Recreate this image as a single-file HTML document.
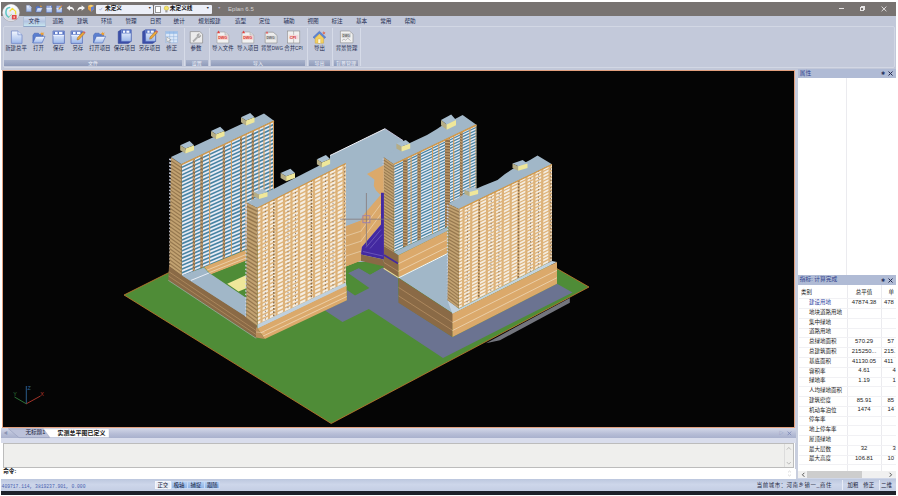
<!DOCTYPE html>
<html lang="zh-CN">
<head>
<meta charset="utf-8">
<title>Eplan 6.5</title>
<style>
html,body{margin:0;padding:0;}
body{width:898px;height:496px;overflow:hidden;position:relative;background:#fff;font-family:"Liberation Sans","Noto Sans CJK SC",sans-serif;font-size:5.6px;color:#1c2a4a;line-height:1;}
.abs{position:absolute;}
#title{left:1px;top:2px;width:895px;height:13.7px;background:#787371;}
#ribbon{left:1px;top:15.7px;width:895px;height:54.3px;background:#c2c8d9;}
#panel{left:2.5px;top:26.4px;width:892.5px;height:42px;background:#c3c9da;border-radius:2px;border:0.6px solid #d2d7e4;box-sizing:border-box;}
.tab{position:absolute;top:18.9px;height:8px;font-size:5.6px;color:#1e2c50;white-space:nowrap;text-align:center;transform:translateX(-50%);}
#tabsel{left:22.5px;top:16.2px;width:23.8px;height:10.4px;border-radius:1.5px 1.5px 0 0;background:linear-gradient(#d3dbee,#b3c4e1 50%,#c6e5ef);border:0.5px solid #aebfd6;border-bottom:0.6px solid #8fa6c8;box-sizing:border-box;}
.btn{position:absolute;top:46px;font-size:5.4px;color:#1e2c50;white-space:nowrap;transform:translateX(-50%);text-align:center;}
.gbar{position:absolute;top:59.6px;height:6.6px;background:linear-gradient(#a9b3cc,#909cba);color:#eef2fa;font-size:5px;text-align:center;line-height:6.6px;overflow:hidden;}
.gsep{position:absolute;top:28px;width:1px;height:38px;background:#d6dbe8;}
#view{left:2px;top:70px;width:793px;height:358px;background:#050505;border:1px solid #e3a07e;box-sizing:border-box;}
.phead{position:absolute;left:797.8px;width:98px;height:8.6px;background:#b0bbd5;font-size:5.7px;color:#2c3c8c;line-height:8.6px;}
.phead span{position:absolute;left:2px;}
.white{background:#fff;}
.vline{position:absolute;width:1px;background:#ebebef;}
.hline{position:absolute;height:1px;background:#f1f1f4;left:798.6px;width:97px;}
.cell{position:absolute;font-size:5.5px;color:#222;white-space:nowrap;}
.val{position:absolute;font-size:5.9px;color:#222;white-space:nowrap;width:33px;left:847.6px;text-align:center;}
#tabstrip{left:1px;top:428px;width:795px;height:10px;background:linear-gradient(#d3d8e8,#b6bdd6 60%,#a9b1cd);}
#cmdout{left:3.2px;top:442.8px;width:790.5px;height:25.7px;background:#efefed;border:1px solid #bcbcbc;box-sizing:border-box;}
#cmdline{left:1px;top:468.6px;width:795px;height:10.3px;background:#fff;}
#status{left:1px;top:478.9px;width:895px;height:11.9px;background:linear-gradient(#bcc7de,#cdd6ea 45%,#c4cee4);}
#taskbar{left:1px;top:490.8px;width:895px;height:4.3px;background:#1d222b;}
.st{position:absolute;top:482.8px;font-size:5.4px;color:#1b2440;white-space:nowrap;}
.c3{font-size:5.9px;}

</style>
</head>
<body>
<div class="abs" id="title"></div>
<div class="abs" id="ribbon"></div>
<div class="abs" id="panel"></div>
<div class="abs" id="tabsel"></div>
<div class="tab" style="left:34.2px">文件</div>
<div class="tab" style="left:58px">道路</div>
<div class="tab" style="left:82.5px">建筑</div>
<div class="tab" style="left:106.6px">环境</div>
<div class="tab" style="left:131px">管理</div>
<div class="tab" style="left:155.4px">日照</div>
<div class="tab" style="left:179.2px">统计</div>
<div class="tab" style="left:209.5px">规划报建</div>
<div class="tab" style="left:240.5px">造型</div>
<div class="tab" style="left:264.5px">定位</div>
<div class="tab" style="left:289px">辅助</div>
<div class="tab" style="left:313px">视图</div>
<div class="tab" style="left:337px">标注</div>
<div class="tab" style="left:361.5px">基本</div>
<div class="tab" style="left:385.8px">常用</div>
<div class="tab" style="left:410px">帮助</div>

<div class="btn" style="left:16px">新建总平</div>
<div class="btn" style="left:38.4px">打开</div>
<div class="btn" style="left:58.4px">保存</div>
<div class="btn" style="left:77.8px">另存</div>
<div class="btn" style="left:99.7px">打开项目</div>
<div class="btn" style="left:124.5px">保存项目</div>
<div class="btn" style="left:149.5px">另存项目</div>
<div class="btn" style="left:171.7px">修正</div>
<div class="btn" style="left:196px">参数</div>
<div class="btn" style="left:222.8px">导入文件</div>
<div class="btn" style="left:247.8px">导入项目</div>
<div class="btn" style="left:272px">背景<span style="font-size:4.5px;letter-spacing:0.1px">DWG</span></div>
<div class="btn" style="left:293.6px">合并<span style="font-size:4.5px;letter-spacing:0.1px">CPI</span></div>
<div class="btn" style="left:319.5px">导出</div>
<div class="btn" style="left:346.5px">背景管理</div>

<div class="gbar" style="left:4px;width:178px">文件</div>
<div class="gbar" style="left:186px;width:21.6px">设置</div>
<div class="gbar" style="left:210.8px;width:94.4px">导入</div>
<div class="gbar" style="left:309px;width:21px">导出</div>
<div class="gbar" style="left:333.6px;width:24.6px">背景管理</div>
<div class="gsep" style="left:184px"></div>
<div class="gsep" style="left:209px"></div>
<div class="gsep" style="left:307px"></div>
<div class="gsep" style="left:331.8px"></div>
<div class="gsep" style="left:360px"></div>

<!-- quick access combos -->
<div class="abs" style="left:96.2px;top:4.8px;width:56.8px;height:8.8px;border-radius:1px;background:#eceff8"></div>
<div class="abs" style="left:105px;top:6.4px;font-size:5.7px;color:#111;font-weight:bold">未定义</div>
<div class="abs" style="left:148px;top:7.2px;font-size:3.6px;color:#333">▼</div>
<div class="abs" style="left:154.2px;top:4.8px;width:58px;height:8.8px;border-radius:1px;background:#eceff8"></div>
<div class="abs" style="left:155.4px;top:5.6px;width:6px;height:7.2px;background:#fff;border:0.5px solid #9a9a9a;box-sizing:border-box"></div>
<div class="abs" style="left:169.8px;top:6.4px;font-size:5.7px;color:#111;font-weight:bold">未定义线</div>
<div class="abs" style="left:206px;top:7.2px;font-size:3.6px;color:#333">▼</div>
<div class="abs" style="left:217.5px;top:7.4px;font-size:3.6px;color:#b0accc">▼</div>
<div class="abs" style="left:228px;top:6.3px;font-size:6px;color:#d6d4d4;letter-spacing:0.05px">Eplan 6.5</div>
<div class="abs" style="left:839px;top:8.3px;width:5.3px;height:0.8px;background:#e6e4e4"></div>
<div class="abs" style="left:860px;top:6.6px;width:4px;height:4.2px;border:0.8px solid #e6e4e4;box-sizing:border-box"></div><div class="abs" style="left:861.2px;top:5.7px;width:4px;height:4.2px;border:0.8px solid #e6e4e4;border-left-width:0;border-bottom-width:0;box-sizing:border-box"></div>
<svg class="abs" style="left:881px;top:5.6px" width="6" height="6" viewBox="0 0 6 6"><path d="M0.6,0.6 L5.4,5.2 M5.4,0.6 L0.6,5.2" stroke="#eceaea" stroke-width="0.9"/></svg>

<svg class="abs" style="left:0;top:0" width="420" height="70" viewBox="0 0 420 70">
<defs>
<linearGradient id="gpage" x1="0" y1="0" x2="0" y2="1"><stop offset="0" stop-color="#f4f8ff"/><stop offset="1" stop-color="#9db8ea"/></linearGradient>
<linearGradient id="gfl" x1="0" y1="0" x2="0" y2="1"><stop offset="0" stop-color="#6f8fd6"/><stop offset="1" stop-color="#b9d0f4"/></linearGradient>
<linearGradient id="gorb" x1="0" y1="0" x2="0" y2="1"><stop offset="0" stop-color="#ffffff"/><stop offset="0.55" stop-color="#e9ebf2"/><stop offset="1" stop-color="#cfd3e0"/></linearGradient>
<g id="page"><path d="M0,0 H6.5 L10.6,3.8 V12.4 H0 Z" fill="url(#gpage)" stroke="#6a82c4" stroke-width="0.7"/><path d="M6.5,0 V3.8 H10.6" fill="#dfe8fb" stroke="#6a82c4" stroke-width="0.6"/></g>
<g id="folder"><path d="M0.5,4 L2,2 H6 L7,3.4 H10.5 V5.2 H3.4 L0.5,11.6 Z" fill="#5b7fd0" stroke="#3f5eb0" stroke-width="0.5"/><path d="M3.4,5.2 H12.6 L9.6,11.8 H0.5 Z" fill="url(#gpage)" stroke="#4a69ba" stroke-width="0.6"/><path d="M9.3,0.2 l0.9,1.5 1.8,-0.3 -1.2,1.3 0.9,1.6 -1.7,-0.8 -1.3,1.3 0.3,-1.8 -1.6,-0.8 1.8,-0.3z" fill="#f0a030"/></g>
<g id="floppy"><path d="M0,0 H11.4 V12.4 H0 Z" fill="url(#gpage)" stroke="#4a64b8" stroke-width="0.7"/><rect x="0.3" y="0.3" width="10.8" height="3.4" fill="#5673c4"/><rect x="2" y="0.9" width="2.6" height="2.2" fill="#f4f7ff"/><rect x="6" y="0.9" width="3.4" height="2.2" fill="#f4f7ff"/><path d="M0.3,4.6 H11.1" stroke="#e9f0ff" stroke-width="1"/></g>
<g id="pencil"><path d="M0,6.4 L5.4,0.6 L7.2,2.2 L1.8,8 L-0.4,8.6 Z" fill="#e9a53a" stroke="#8a5a1a" stroke-width="0.4"/><path d="M5.4,0.6 L6.4,-0.4 L8.2,1.2 L7.2,2.2 Z" fill="#d06060"/></g>
<g id="floppy3"><path d="M0,1.8 L3,0 H13 V11.6 L10,13.6 H0 Z" fill="#3c4fa8" stroke="#2f4496" stroke-width="0.5"/><path d="M3,0 H13 V11.6 H3 Z" fill="url(#gpage)" stroke="#4a64b8" stroke-width="0.5"/><rect x="3.2" y="0.2" width="9.6" height="3.4" fill="#5673c4"/><rect x="4.8" y="0.8" width="2.2" height="2.2" fill="#f4f7ff"/><rect x="8.2" y="0.8" width="3" height="2.2" fill="#f4f7ff"/></g>
<g id="dwgpage"><path d="M0,1.4 H8 L11.8,4.6 V12.4 H0 Z" fill="#f2f2f2" stroke="#9a9a9a" stroke-width="0.6"/><path d="M8,1.4 V4.6 H11.8" fill="#dcdcdc" stroke="#9a9a9a" stroke-width="0.5"/><rect x="0.6" y="4.8" width="10.6" height="4.4" fill="#f6d2cc"/></g>
</defs>
<!-- orb -->
<circle cx="11" cy="12.8" r="8.9" fill="#8a8684" opacity="0.6"/>
<circle cx="11" cy="12.7" r="8.2" fill="url(#gorb)" stroke="#f6f6f8" stroke-width="0.6"/>
<path d="M9.6,7.6 C5.2,8 4.6,14.8 8.6,17.2" fill="none" stroke="#5fc6c6" stroke-width="1.5" stroke-linecap="round"/>
<path d="M9.6,11.4 L12.4,8.4 L15.6,11.4 V14.6" fill="none" stroke="#f2dc3c" stroke-width="1.3" stroke-linejoin="round"/>
<path d="M8.6,17.2 L11.6,14.4" fill="none" stroke="#8fd08f" stroke-width="0.9"/>
<rect x="11.9" y="15" width="4.7" height="4.4" fill="#e04a4a"/>
<rect x="13.4" y="16.2" width="1.6" height="2" fill="#f6b0a0"/>
<!-- quick access -->
<g transform="translate(26.3,5.2) scale(0.47,0.52)"><use href="#page"/></g>
<g transform="translate(35.6,5) scale(0.54,0.6)"><use href="#folder"/></g>
<g transform="translate(46.3,5.8) scale(0.5,0.54)"><use href="#floppy"/></g>
<g transform="translate(56.3,5.8) scale(0.5,0.54)"><use href="#floppy"/><g transform="translate(5,-1) scale(0.9)"><use href="#pencil"/></g></g>
<path d="M66.6,8 L70,5.2 V6.8 C73,6.8 74.2,8.6 74.2,11.2 C73.4,9.6 72.2,9 70,9 V10.8 Z" fill="#f4f4f4"/>
<path d="M85,8 L81.6,5.2 V6.8 C78.6,6.8 77.4,8.6 77.4,11.2 C78.2,9.6 79.4,9 81.6,9 V10.8 Z" fill="#f4f4f4"/>
<path d="M88,6 L91,4.8 L94,6 V9.2 L91,11.8 L88,9.2 Z" fill="#e8a040"/><path d="M88,6 L91,7.2 L94,6 L91,4.8Z" fill="#f4d070"/><path d="M91,7.2 V11.8 L94,9.2 V6Z" fill="#5f80d2"/>
<path d="M99.4,9 l1,1.2 1.8,-2.4" fill="none" stroke="#9ab0e0" stroke-width="0.8"/>
<circle cx="166.4" cy="8.2" r="2.2" fill="#f4e46a" stroke="#b8a030" stroke-width="0.4"/><rect x="165.3" y="10.2" width="2.2" height="2.2" fill="#a0a0a0"/>
<!-- ribbon icons -->
<g transform="translate(11.4,31)"><use href="#page"/></g>
<g transform="translate(32.4,31.2)"><use href="#folder"/></g>
<g transform="translate(53,31)"><use href="#floppy"/></g>
<g transform="translate(71,31)"><use href="#floppy"/><g transform="translate(6.4,0.4)"><use href="#pencil"/></g></g>
<g transform="translate(93,31.2)"><use href="#folder"/></g>
<g transform="translate(118.2,29.8)"><use href="#floppy3"/></g>
<g transform="translate(142.6,29.8)"><use href="#floppy3"/><g transform="translate(7.4,0.8)"><use href="#pencil"/></g></g>
<!-- grid (修正) -->
<g transform="translate(165.8,31.6)"><rect x="0" y="0" width="11.8" height="11.2" fill="#dbe8f8" stroke="#8fb0dc" stroke-width="0.5"/><rect x="0" y="0" width="11.8" height="2.2" fill="#9cc0ea"/><path d="M3.9,0 V11.2 M7.9,0 V11.2 M0,5 H11.8 M0,8.2 H11.8" stroke="#8fb0dc" stroke-width="0.5"/><path d="M1,5.4 L5.2,8.4 L3.4,8.8 L4.4,11 L3.4,11.2 L2.4,9.2 L1,10.4 Z" fill="#f4f4f4" stroke="#707070" stroke-width="0.4"/></g>
<!-- wrench (参数) -->
<g transform="translate(190.2,31.6)"><path d="M0,0 H9.6 L12.4,2.6 V11.4 H0 Z" fill="#ececec" stroke="#8c8c8c" stroke-width="0.7"/><path d="M2.6,9.4 L7,4.8 C6.4,3.2 7.6,1.8 9.4,2.2 L8.2,3.6 L9,4.6 L10.4,3.6 C10.6,5.4 9.2,6.4 7.8,5.8 L3.6,10.2 Z" fill="#b8b8b8" stroke="#7c7c7c" stroke-width="0.4"/></g>
<g transform="translate(217,30.6)"><use href="#dwgpage"/><text x="1.2" y="8.6" font-size="3.7" font-weight="bold" fill="#d8352c" font-family="Liberation Sans, sans-serif">DWG</text><path d="M0,2.6 l1.6,-2.6 1.6,2.6z" fill="#e04040"/></g>
<g transform="translate(242,30.6)"><use href="#dwgpage"/><text x="1.2" y="8.6" font-size="3.7" font-weight="bold" fill="#d8352c" font-family="Liberation Sans, sans-serif">DWG</text><path d="M0,2.6 l1.6,-2.6 1.6,2.6z" fill="#e04040"/></g>
<g transform="translate(265.2,30.8)"><path d="M0,1.4 H8 L11.8,4.6 V12.2 H0 Z" fill="#ececec" stroke="#8c8c8c" stroke-width="0.6"/><rect x="0.6" y="5" width="10.6" height="4" fill="#d8d8d8"/><text x="1.2" y="8.4" font-size="3.4" font-weight="bold" fill="#666" font-family="Liberation Sans, sans-serif">DWG</text><path d="M0.4,2.6 l1.4,-2.2 1.4,2.2z" fill="#e05050"/></g>
<g transform="translate(287.4,31)"><rect x="0" y="0" width="12.4" height="12" fill="#f0f0f0" stroke="#8c8c8c" stroke-width="0.6"/><path d="M6.2,0 V12" stroke="#8c8c8c" stroke-width="0.5"/><rect x="1.4" y="3.8" width="9.6" height="4.4" fill="#f6dada"/><text x="2.4" y="7.6" font-size="3.8" font-weight="bold" fill="#d03030" font-family="Liberation Sans, sans-serif">CPI</text></g>
<!-- house (导出) -->
<g transform="translate(313,30.6)"><path d="M0,6.6 L6.4,0.6 L12.8,6.6 L11.4,7.8 L6.4,3 L1.4,7.8 Z" fill="#5b86d6" stroke="#3a5cae" stroke-width="0.4"/><path d="M2.2,7.4 L6.4,3.4 L10.6,7.4 V12.6 H2.2 Z" fill="#f4d060" stroke="#c09a30" stroke-width="0.4"/><rect x="5" y="8.4" width="2.8" height="4.2" fill="#fff8e0" stroke="#c09a30" stroke-width="0.3"/><path d="M10.4,0.4 l0.8,1.2 1.4,-0.2 -0.9,1.1 0.6,1.3 -1.3,-0.6 -1,1 0.2,-1.4 -1.2,-0.7 1.4,-0.3z" fill="#e06a50"/></g>
<g transform="translate(340.4,31)"><path d="M0,0 H9 L12.6,3 V11.8 H0 Z" fill="#f0f0f0" stroke="#8c8c8c" stroke-width="0.6"/><rect x="1.6" y="2.6" width="8.6" height="3.6" fill="#e2e2e2" stroke="#aaa" stroke-width="0.3"/><text x="2.2" y="5.6" font-size="3" font-weight="bold" fill="#555" font-family="Liberation Sans, sans-serif">DWG</text><path d="M1.6,9.6 l2,-1.6 1.6,1.2 2.2,-2 2.8,2.4" fill="none" stroke="#888" stroke-width="0.5"/></g>
</svg>


<div class="abs" id="view"></div>
<svg width="898" height="496" viewBox="0 0 898 496" style="position:absolute;left:0;top:0" shape-rendering="geometricPrecision">
<defs><filter id="bl" x="-5%" y="-5%" width="110%" height="110%"><feGaussianBlur stdDeviation="0.45"/></filter></defs>
<polygon points="124.0,295.0 331.2,423.5 589.0,287.0 380.0,167.0" fill="#4f8c37" stroke="#c9782f" stroke-width="0.8"/>
<polygon points="486.0,343.2 569.8,297.9 569.8,302.8 500.0,340.2" fill="#73757d"/>
<polygon points="348.0,273.0 358.8,268.0 370.0,274.4 382.5,267.5 398.0,278.0 398.8,302.5 452.5,337.0 557.0,283.8 572.5,292.5 443.0,358.0 368.8,309.0 342.5,322.0 325.0,310.5 346.9,300.0 347.0,290.0 355.0,295.6 369.4,288.0" fill="#6b7391"/>
<polygon points="385.0,128.7 403.0,140.5 400.0,170.0 384.0,262.0 346.0,262.0 330.0,240.0 330.0,155.5" fill="#a1b7c8"/>
<line x1="385.0" y1="128.7" x2="330.0" y2="155.5" stroke="#f4f4fa" stroke-width="1.0"/>
<line x1="385.0" y1="128.7" x2="403.0" y2="140.5" stroke="#d9d4ee" stroke-width="0.8"/>
<polygon points="181.5,164.0 274.0,120.5 274.0,238.0 181.5,276.5" fill="#4783a2"/>
<clipPath id="c1"><polygon points="181.5,164.0 274.0,120.5 274.0,238.0 181.5,276.5"/></clipPath>
<g clip-path="url(#c1)"><g filter="url(#bl)">
<line x1="181.5" y1="165.8" x2="274.0" y2="122.4" stroke="#e9ecf6" stroke-width="1.78"/>
<line x1="181.5" y1="169.4" x2="274.0" y2="126.2" stroke="#e9ecf6" stroke-width="1.78"/>
<line x1="181.5" y1="173.1" x2="274.0" y2="130.0" stroke="#e9ecf6" stroke-width="1.78"/>
<line x1="181.5" y1="176.7" x2="274.0" y2="133.8" stroke="#e9ecf6" stroke-width="1.78"/>
<line x1="181.5" y1="180.3" x2="274.0" y2="137.6" stroke="#e9ecf6" stroke-width="1.78"/>
<line x1="181.5" y1="184.0" x2="274.0" y2="141.3" stroke="#e9ecf6" stroke-width="1.78"/>
<line x1="181.5" y1="187.6" x2="274.0" y2="145.1" stroke="#e9ecf6" stroke-width="1.78"/>
<line x1="181.5" y1="191.2" x2="274.0" y2="148.9" stroke="#e9ecf6" stroke-width="1.78"/>
<line x1="181.5" y1="194.8" x2="274.0" y2="152.7" stroke="#e9ecf6" stroke-width="1.78"/>
<line x1="181.5" y1="198.5" x2="274.0" y2="156.5" stroke="#e9ecf6" stroke-width="1.78"/>
<line x1="181.5" y1="202.1" x2="274.0" y2="160.3" stroke="#e9ecf6" stroke-width="1.78"/>
<line x1="181.5" y1="205.7" x2="274.0" y2="164.1" stroke="#e9ecf6" stroke-width="1.78"/>
<line x1="181.5" y1="209.4" x2="274.0" y2="167.9" stroke="#e9ecf6" stroke-width="1.78"/>
<line x1="181.5" y1="213.0" x2="274.0" y2="171.7" stroke="#e9ecf6" stroke-width="1.78"/>
<line x1="181.5" y1="216.6" x2="274.0" y2="175.5" stroke="#e9ecf6" stroke-width="1.78"/>
<line x1="181.5" y1="220.2" x2="274.0" y2="179.2" stroke="#e9ecf6" stroke-width="1.78"/>
<line x1="181.5" y1="223.9" x2="274.0" y2="183.0" stroke="#e9ecf6" stroke-width="1.78"/>
<line x1="181.5" y1="227.5" x2="274.0" y2="186.8" stroke="#e9ecf6" stroke-width="1.78"/>
<line x1="181.5" y1="231.1" x2="274.0" y2="190.6" stroke="#e9ecf6" stroke-width="1.78"/>
<line x1="181.5" y1="234.8" x2="274.0" y2="194.4" stroke="#e9ecf6" stroke-width="1.78"/>
<line x1="181.5" y1="238.4" x2="274.0" y2="198.2" stroke="#e9ecf6" stroke-width="1.78"/>
<line x1="181.5" y1="242.0" x2="274.0" y2="202.0" stroke="#e9ecf6" stroke-width="1.78"/>
<line x1="181.5" y1="245.7" x2="274.0" y2="205.8" stroke="#e9ecf6" stroke-width="1.78"/>
<line x1="181.5" y1="249.3" x2="274.0" y2="209.6" stroke="#e9ecf6" stroke-width="1.78"/>
<line x1="181.5" y1="252.9" x2="274.0" y2="213.4" stroke="#e9ecf6" stroke-width="1.78"/>
<line x1="181.5" y1="256.5" x2="274.0" y2="217.2" stroke="#e9ecf6" stroke-width="1.78"/>
<line x1="181.5" y1="260.2" x2="274.0" y2="220.9" stroke="#e9ecf6" stroke-width="1.78"/>
<line x1="181.5" y1="263.8" x2="274.0" y2="224.7" stroke="#e9ecf6" stroke-width="1.78"/>
<line x1="181.5" y1="267.4" x2="274.0" y2="228.5" stroke="#e9ecf6" stroke-width="1.78"/>
<line x1="181.5" y1="271.1" x2="274.0" y2="232.3" stroke="#e9ecf6" stroke-width="1.78"/>
<line x1="181.5" y1="274.7" x2="274.0" y2="236.1" stroke="#e9ecf6" stroke-width="1.78"/>
<line x1="181.5" y1="164.0" x2="181.5" y2="276.5" stroke="#d39f60" stroke-width="1.1"/>
<line x1="209.6" y1="150.8" x2="209.6" y2="264.8" stroke="#d39f60" stroke-width="1.1"/>
<line x1="231.4" y1="140.5" x2="231.4" y2="255.7" stroke="#d39f60" stroke-width="1.1"/>
<line x1="246.0" y1="133.7" x2="246.0" y2="249.7" stroke="#d39f60" stroke-width="1.1"/>
<line x1="259.0" y1="127.5" x2="259.0" y2="244.2" stroke="#d39f60" stroke-width="1.1"/>
<line x1="264.0" y1="125.2" x2="264.0" y2="242.2" stroke="#d39f60" stroke-width="1.1"/>
<line x1="270.0" y1="122.4" x2="270.0" y2="239.7" stroke="#d39f60" stroke-width="1.1"/>
<line x1="273.5" y1="120.7" x2="273.5" y2="238.2" stroke="#d39f60" stroke-width="1.1"/>
<polygon points="192.8,158.7 195.0,157.6 195.0,270.9 192.8,271.8" fill="#8a6a46"/>
<line x1="192.8" y1="159.2" x2="195.0" y2="160.8" stroke="#c4a274" stroke-width="1.53"/>
<line x1="192.8" y1="162.9" x2="195.0" y2="164.4" stroke="#c4a274" stroke-width="1.53"/>
<line x1="192.8" y1="166.5" x2="195.0" y2="168.1" stroke="#c4a274" stroke-width="1.53"/>
<line x1="192.8" y1="170.2" x2="195.0" y2="171.7" stroke="#c4a274" stroke-width="1.53"/>
<line x1="192.8" y1="173.8" x2="195.0" y2="175.4" stroke="#c4a274" stroke-width="1.53"/>
<line x1="192.8" y1="177.5" x2="195.0" y2="179.0" stroke="#c4a274" stroke-width="1.53"/>
<line x1="192.8" y1="181.1" x2="195.0" y2="182.7" stroke="#c4a274" stroke-width="1.53"/>
<line x1="192.8" y1="184.8" x2="195.0" y2="186.3" stroke="#c4a274" stroke-width="1.53"/>
<line x1="192.8" y1="188.4" x2="195.0" y2="190.0" stroke="#c4a274" stroke-width="1.53"/>
<line x1="192.8" y1="192.1" x2="195.0" y2="193.6" stroke="#c4a274" stroke-width="1.53"/>
<line x1="192.8" y1="195.7" x2="195.0" y2="197.3" stroke="#c4a274" stroke-width="1.53"/>
<line x1="192.8" y1="199.4" x2="195.0" y2="201.0" stroke="#c4a274" stroke-width="1.53"/>
<line x1="192.8" y1="203.0" x2="195.0" y2="204.6" stroke="#c4a274" stroke-width="1.53"/>
<line x1="192.8" y1="206.7" x2="195.0" y2="208.3" stroke="#c4a274" stroke-width="1.53"/>
<line x1="192.8" y1="210.3" x2="195.0" y2="211.9" stroke="#c4a274" stroke-width="1.53"/>
<line x1="192.8" y1="213.9" x2="195.0" y2="215.6" stroke="#c4a274" stroke-width="1.53"/>
<line x1="192.8" y1="217.6" x2="195.0" y2="219.2" stroke="#c4a274" stroke-width="1.53"/>
<line x1="192.8" y1="221.2" x2="195.0" y2="222.9" stroke="#c4a274" stroke-width="1.53"/>
<line x1="192.8" y1="224.9" x2="195.0" y2="226.5" stroke="#c4a274" stroke-width="1.53"/>
<line x1="192.8" y1="228.5" x2="195.0" y2="230.2" stroke="#c4a274" stroke-width="1.53"/>
<line x1="192.8" y1="232.2" x2="195.0" y2="233.8" stroke="#c4a274" stroke-width="1.53"/>
<line x1="192.8" y1="235.8" x2="195.0" y2="237.5" stroke="#c4a274" stroke-width="1.53"/>
<line x1="192.8" y1="239.5" x2="195.0" y2="241.1" stroke="#c4a274" stroke-width="1.53"/>
<line x1="192.8" y1="243.1" x2="195.0" y2="244.8" stroke="#c4a274" stroke-width="1.53"/>
<line x1="192.8" y1="246.8" x2="195.0" y2="248.4" stroke="#c4a274" stroke-width="1.53"/>
<line x1="192.8" y1="250.4" x2="195.0" y2="252.1" stroke="#c4a274" stroke-width="1.53"/>
<line x1="192.8" y1="254.1" x2="195.0" y2="255.7" stroke="#c4a274" stroke-width="1.53"/>
<line x1="192.8" y1="257.7" x2="195.0" y2="259.4" stroke="#c4a274" stroke-width="1.53"/>
<line x1="192.8" y1="261.4" x2="195.0" y2="263.0" stroke="#c4a274" stroke-width="1.53"/>
<line x1="192.8" y1="265.0" x2="195.0" y2="266.7" stroke="#c4a274" stroke-width="1.53"/>
<line x1="192.8" y1="268.7" x2="195.0" y2="270.4" stroke="#c4a274" stroke-width="1.53"/>
<polygon points="200.5,155.1 202.8,154.0 202.8,267.6 200.5,268.6" fill="#8a6a46"/>
<line x1="200.5" y1="155.6" x2="202.8" y2="157.1" stroke="#c4a274" stroke-width="1.54"/>
<line x1="200.5" y1="159.3" x2="202.8" y2="160.8" stroke="#c4a274" stroke-width="1.54"/>
<line x1="200.5" y1="162.9" x2="202.8" y2="164.5" stroke="#c4a274" stroke-width="1.54"/>
<line x1="200.5" y1="166.6" x2="202.8" y2="168.1" stroke="#c4a274" stroke-width="1.54"/>
<line x1="200.5" y1="170.3" x2="202.8" y2="171.8" stroke="#c4a274" stroke-width="1.54"/>
<line x1="200.5" y1="173.9" x2="202.8" y2="175.5" stroke="#c4a274" stroke-width="1.54"/>
<line x1="200.5" y1="177.6" x2="202.8" y2="179.1" stroke="#c4a274" stroke-width="1.54"/>
<line x1="200.5" y1="181.2" x2="202.8" y2="182.8" stroke="#c4a274" stroke-width="1.54"/>
<line x1="200.5" y1="184.9" x2="202.8" y2="186.5" stroke="#c4a274" stroke-width="1.54"/>
<line x1="200.5" y1="188.6" x2="202.8" y2="190.1" stroke="#c4a274" stroke-width="1.54"/>
<line x1="200.5" y1="192.2" x2="202.8" y2="193.8" stroke="#c4a274" stroke-width="1.54"/>
<line x1="200.5" y1="195.9" x2="202.8" y2="197.5" stroke="#c4a274" stroke-width="1.54"/>
<line x1="200.5" y1="199.6" x2="202.8" y2="201.1" stroke="#c4a274" stroke-width="1.54"/>
<line x1="200.5" y1="203.2" x2="202.8" y2="204.8" stroke="#c4a274" stroke-width="1.54"/>
<line x1="200.5" y1="206.9" x2="202.8" y2="208.5" stroke="#c4a274" stroke-width="1.54"/>
<line x1="200.5" y1="210.5" x2="202.8" y2="212.1" stroke="#c4a274" stroke-width="1.54"/>
<line x1="200.5" y1="214.2" x2="202.8" y2="215.8" stroke="#c4a274" stroke-width="1.54"/>
<line x1="200.5" y1="217.9" x2="202.8" y2="219.5" stroke="#c4a274" stroke-width="1.54"/>
<line x1="200.5" y1="221.5" x2="202.8" y2="223.1" stroke="#c4a274" stroke-width="1.54"/>
<line x1="200.5" y1="225.2" x2="202.8" y2="226.8" stroke="#c4a274" stroke-width="1.54"/>
<line x1="200.5" y1="228.9" x2="202.8" y2="230.5" stroke="#c4a274" stroke-width="1.54"/>
<line x1="200.5" y1="232.5" x2="202.8" y2="234.1" stroke="#c4a274" stroke-width="1.54"/>
<line x1="200.5" y1="236.2" x2="202.8" y2="237.8" stroke="#c4a274" stroke-width="1.54"/>
<line x1="200.5" y1="239.8" x2="202.8" y2="241.4" stroke="#c4a274" stroke-width="1.54"/>
<line x1="200.5" y1="243.5" x2="202.8" y2="245.1" stroke="#c4a274" stroke-width="1.54"/>
<line x1="200.5" y1="247.2" x2="202.8" y2="248.8" stroke="#c4a274" stroke-width="1.54"/>
<line x1="200.5" y1="250.8" x2="202.8" y2="252.4" stroke="#c4a274" stroke-width="1.54"/>
<line x1="200.5" y1="254.5" x2="202.8" y2="256.1" stroke="#c4a274" stroke-width="1.54"/>
<line x1="200.5" y1="258.2" x2="202.8" y2="259.8" stroke="#c4a274" stroke-width="1.54"/>
<line x1="200.5" y1="261.8" x2="202.8" y2="263.4" stroke="#c4a274" stroke-width="1.54"/>
<line x1="200.5" y1="265.5" x2="202.8" y2="267.1" stroke="#c4a274" stroke-width="1.54"/>
<polygon points="222.8,144.6 225.0,143.6 225.0,258.4 222.8,259.3" fill="#8a6a46"/>
<line x1="222.8" y1="145.1" x2="225.0" y2="146.7" stroke="#c4a274" stroke-width="1.55"/>
<line x1="222.8" y1="148.8" x2="225.0" y2="150.4" stroke="#c4a274" stroke-width="1.55"/>
<line x1="222.8" y1="152.5" x2="225.0" y2="154.1" stroke="#c4a274" stroke-width="1.55"/>
<line x1="222.8" y1="156.2" x2="225.0" y2="157.8" stroke="#c4a274" stroke-width="1.55"/>
<line x1="222.8" y1="159.9" x2="225.0" y2="161.5" stroke="#c4a274" stroke-width="1.55"/>
<line x1="222.8" y1="163.6" x2="225.0" y2="165.2" stroke="#c4a274" stroke-width="1.55"/>
<line x1="222.8" y1="167.3" x2="225.0" y2="168.9" stroke="#c4a274" stroke-width="1.55"/>
<line x1="222.8" y1="171.0" x2="225.0" y2="172.6" stroke="#c4a274" stroke-width="1.55"/>
<line x1="222.8" y1="174.7" x2="225.0" y2="176.3" stroke="#c4a274" stroke-width="1.55"/>
<line x1="222.8" y1="178.4" x2="225.0" y2="180.1" stroke="#c4a274" stroke-width="1.55"/>
<line x1="222.8" y1="182.1" x2="225.0" y2="183.8" stroke="#c4a274" stroke-width="1.55"/>
<line x1="222.8" y1="185.8" x2="225.0" y2="187.5" stroke="#c4a274" stroke-width="1.55"/>
<line x1="222.8" y1="189.5" x2="225.0" y2="191.2" stroke="#c4a274" stroke-width="1.55"/>
<line x1="222.8" y1="193.2" x2="225.0" y2="194.9" stroke="#c4a274" stroke-width="1.55"/>
<line x1="222.8" y1="196.9" x2="225.0" y2="198.6" stroke="#c4a274" stroke-width="1.55"/>
<line x1="222.8" y1="200.6" x2="225.0" y2="202.3" stroke="#c4a274" stroke-width="1.55"/>
<line x1="222.8" y1="204.3" x2="225.0" y2="206.0" stroke="#c4a274" stroke-width="1.55"/>
<line x1="222.8" y1="208.0" x2="225.0" y2="209.7" stroke="#c4a274" stroke-width="1.55"/>
<line x1="222.8" y1="211.7" x2="225.0" y2="213.4" stroke="#c4a274" stroke-width="1.55"/>
<line x1="222.8" y1="215.4" x2="225.0" y2="217.1" stroke="#c4a274" stroke-width="1.55"/>
<line x1="222.8" y1="219.1" x2="225.0" y2="220.8" stroke="#c4a274" stroke-width="1.55"/>
<line x1="222.8" y1="222.8" x2="225.0" y2="224.5" stroke="#c4a274" stroke-width="1.55"/>
<line x1="222.8" y1="226.5" x2="225.0" y2="228.2" stroke="#c4a274" stroke-width="1.55"/>
<line x1="222.8" y1="230.2" x2="225.0" y2="231.9" stroke="#c4a274" stroke-width="1.55"/>
<line x1="222.8" y1="233.9" x2="225.0" y2="235.6" stroke="#c4a274" stroke-width="1.55"/>
<line x1="222.8" y1="237.6" x2="225.0" y2="239.3" stroke="#c4a274" stroke-width="1.55"/>
<line x1="222.8" y1="241.3" x2="225.0" y2="243.0" stroke="#c4a274" stroke-width="1.55"/>
<line x1="222.8" y1="245.0" x2="225.0" y2="246.7" stroke="#c4a274" stroke-width="1.55"/>
<line x1="222.8" y1="248.7" x2="225.0" y2="250.4" stroke="#c4a274" stroke-width="1.55"/>
<line x1="222.8" y1="252.4" x2="225.0" y2="254.1" stroke="#c4a274" stroke-width="1.55"/>
<line x1="222.8" y1="256.1" x2="225.0" y2="257.9" stroke="#c4a274" stroke-width="1.55"/>
<polygon points="240.0,136.5 242.0,135.6 242.0,251.3 240.0,252.2" fill="#8a6a46"/>
<line x1="240.0" y1="137.1" x2="242.0" y2="138.7" stroke="#c4a274" stroke-width="1.57"/>
<line x1="240.0" y1="140.8" x2="242.0" y2="142.5" stroke="#c4a274" stroke-width="1.57"/>
<line x1="240.0" y1="144.5" x2="242.0" y2="146.2" stroke="#c4a274" stroke-width="1.57"/>
<line x1="240.0" y1="148.3" x2="242.0" y2="149.9" stroke="#c4a274" stroke-width="1.57"/>
<line x1="240.0" y1="152.0" x2="242.0" y2="153.7" stroke="#c4a274" stroke-width="1.57"/>
<line x1="240.0" y1="155.7" x2="242.0" y2="157.4" stroke="#c4a274" stroke-width="1.57"/>
<line x1="240.0" y1="159.5" x2="242.0" y2="161.1" stroke="#c4a274" stroke-width="1.57"/>
<line x1="240.0" y1="163.2" x2="242.0" y2="164.9" stroke="#c4a274" stroke-width="1.57"/>
<line x1="240.0" y1="166.9" x2="242.0" y2="168.6" stroke="#c4a274" stroke-width="1.57"/>
<line x1="240.0" y1="170.7" x2="242.0" y2="172.3" stroke="#c4a274" stroke-width="1.57"/>
<line x1="240.0" y1="174.4" x2="242.0" y2="176.1" stroke="#c4a274" stroke-width="1.57"/>
<line x1="240.0" y1="178.1" x2="242.0" y2="179.8" stroke="#c4a274" stroke-width="1.57"/>
<line x1="240.0" y1="181.8" x2="242.0" y2="183.5" stroke="#c4a274" stroke-width="1.57"/>
<line x1="240.0" y1="185.6" x2="242.0" y2="187.3" stroke="#c4a274" stroke-width="1.57"/>
<line x1="240.0" y1="189.3" x2="242.0" y2="191.0" stroke="#c4a274" stroke-width="1.57"/>
<line x1="240.0" y1="193.0" x2="242.0" y2="194.7" stroke="#c4a274" stroke-width="1.57"/>
<line x1="240.0" y1="196.8" x2="242.0" y2="198.5" stroke="#c4a274" stroke-width="1.57"/>
<line x1="240.0" y1="200.5" x2="242.0" y2="202.2" stroke="#c4a274" stroke-width="1.57"/>
<line x1="240.0" y1="204.2" x2="242.0" y2="205.9" stroke="#c4a274" stroke-width="1.57"/>
<line x1="240.0" y1="208.0" x2="242.0" y2="209.7" stroke="#c4a274" stroke-width="1.57"/>
<line x1="240.0" y1="211.7" x2="242.0" y2="213.4" stroke="#c4a274" stroke-width="1.57"/>
<line x1="240.0" y1="215.4" x2="242.0" y2="217.1" stroke="#c4a274" stroke-width="1.57"/>
<line x1="240.0" y1="219.2" x2="242.0" y2="220.9" stroke="#c4a274" stroke-width="1.57"/>
<line x1="240.0" y1="222.9" x2="242.0" y2="224.6" stroke="#c4a274" stroke-width="1.57"/>
<line x1="240.0" y1="226.6" x2="242.0" y2="228.3" stroke="#c4a274" stroke-width="1.57"/>
<line x1="240.0" y1="230.3" x2="242.0" y2="232.1" stroke="#c4a274" stroke-width="1.57"/>
<line x1="240.0" y1="234.1" x2="242.0" y2="235.8" stroke="#c4a274" stroke-width="1.57"/>
<line x1="240.0" y1="237.8" x2="242.0" y2="239.6" stroke="#c4a274" stroke-width="1.57"/>
<line x1="240.0" y1="241.5" x2="242.0" y2="243.3" stroke="#c4a274" stroke-width="1.57"/>
<line x1="240.0" y1="245.3" x2="242.0" y2="247.0" stroke="#c4a274" stroke-width="1.57"/>
<line x1="240.0" y1="249.0" x2="242.0" y2="250.8" stroke="#c4a274" stroke-width="1.57"/>
<polygon points="251.8,130.9 253.8,130.0 253.8,246.4 251.8,247.2" fill="#8a6a46"/>
<line x1="251.8" y1="131.5" x2="253.8" y2="133.2" stroke="#c4a274" stroke-width="1.58"/>
<line x1="251.8" y1="135.3" x2="253.8" y2="136.9" stroke="#c4a274" stroke-width="1.58"/>
<line x1="251.8" y1="139.0" x2="253.8" y2="140.7" stroke="#c4a274" stroke-width="1.58"/>
<line x1="251.8" y1="142.8" x2="253.8" y2="144.4" stroke="#c4a274" stroke-width="1.58"/>
<line x1="251.8" y1="146.5" x2="253.8" y2="148.2" stroke="#c4a274" stroke-width="1.58"/>
<line x1="251.8" y1="150.3" x2="253.8" y2="151.9" stroke="#c4a274" stroke-width="1.58"/>
<line x1="251.8" y1="154.0" x2="253.8" y2="155.7" stroke="#c4a274" stroke-width="1.58"/>
<line x1="251.8" y1="157.8" x2="253.8" y2="159.4" stroke="#c4a274" stroke-width="1.58"/>
<line x1="251.8" y1="161.5" x2="253.8" y2="163.2" stroke="#c4a274" stroke-width="1.58"/>
<line x1="251.8" y1="165.3" x2="253.8" y2="167.0" stroke="#c4a274" stroke-width="1.58"/>
<line x1="251.8" y1="169.0" x2="253.8" y2="170.7" stroke="#c4a274" stroke-width="1.58"/>
<line x1="251.8" y1="172.8" x2="253.8" y2="174.5" stroke="#c4a274" stroke-width="1.58"/>
<line x1="251.8" y1="176.5" x2="253.8" y2="178.2" stroke="#c4a274" stroke-width="1.58"/>
<line x1="251.8" y1="180.3" x2="253.8" y2="182.0" stroke="#c4a274" stroke-width="1.58"/>
<line x1="251.8" y1="184.0" x2="253.8" y2="185.7" stroke="#c4a274" stroke-width="1.58"/>
<line x1="251.8" y1="187.8" x2="253.8" y2="189.5" stroke="#c4a274" stroke-width="1.58"/>
<line x1="251.8" y1="191.5" x2="253.8" y2="193.2" stroke="#c4a274" stroke-width="1.58"/>
<line x1="251.8" y1="195.3" x2="253.8" y2="197.0" stroke="#c4a274" stroke-width="1.58"/>
<line x1="251.8" y1="199.0" x2="253.8" y2="200.8" stroke="#c4a274" stroke-width="1.58"/>
<line x1="251.8" y1="202.8" x2="253.8" y2="204.5" stroke="#c4a274" stroke-width="1.58"/>
<line x1="251.8" y1="206.5" x2="253.8" y2="208.3" stroke="#c4a274" stroke-width="1.58"/>
<line x1="251.8" y1="210.3" x2="253.8" y2="212.0" stroke="#c4a274" stroke-width="1.58"/>
<line x1="251.8" y1="214.1" x2="253.8" y2="215.8" stroke="#c4a274" stroke-width="1.58"/>
<line x1="251.8" y1="217.8" x2="253.8" y2="219.5" stroke="#c4a274" stroke-width="1.58"/>
<line x1="251.8" y1="221.6" x2="253.8" y2="223.3" stroke="#c4a274" stroke-width="1.58"/>
<line x1="251.8" y1="225.3" x2="253.8" y2="227.0" stroke="#c4a274" stroke-width="1.58"/>
<line x1="251.8" y1="229.1" x2="253.8" y2="230.8" stroke="#c4a274" stroke-width="1.58"/>
<line x1="251.8" y1="232.8" x2="253.8" y2="234.5" stroke="#c4a274" stroke-width="1.58"/>
<line x1="251.8" y1="236.6" x2="253.8" y2="238.3" stroke="#c4a274" stroke-width="1.58"/>
<line x1="251.8" y1="240.3" x2="253.8" y2="242.1" stroke="#c4a274" stroke-width="1.58"/>
<line x1="251.8" y1="244.1" x2="253.8" y2="245.8" stroke="#c4a274" stroke-width="1.58"/>
</g></g>
<g filter="url(#bl)">
<line x1="169.3" y1="158.9" x2="171.1" y2="160.0" stroke="#cdd3e6" stroke-width="1.72"/>
<line x1="169.3" y1="162.4" x2="171.1" y2="163.5" stroke="#cdd3e6" stroke-width="1.72"/>
<line x1="169.3" y1="165.8" x2="171.1" y2="166.9" stroke="#cdd3e6" stroke-width="1.72"/>
<line x1="169.3" y1="169.2" x2="171.1" y2="170.3" stroke="#cdd3e6" stroke-width="1.72"/>
<line x1="169.3" y1="172.7" x2="171.1" y2="173.8" stroke="#cdd3e6" stroke-width="1.72"/>
<line x1="169.3" y1="176.1" x2="171.1" y2="177.2" stroke="#cdd3e6" stroke-width="1.72"/>
<line x1="169.3" y1="179.5" x2="171.1" y2="180.6" stroke="#cdd3e6" stroke-width="1.72"/>
<line x1="169.3" y1="183.0" x2="171.1" y2="184.1" stroke="#cdd3e6" stroke-width="1.72"/>
<line x1="169.3" y1="186.4" x2="171.1" y2="187.5" stroke="#cdd3e6" stroke-width="1.72"/>
<line x1="169.3" y1="189.9" x2="171.1" y2="191.0" stroke="#cdd3e6" stroke-width="1.72"/>
<line x1="169.3" y1="193.3" x2="171.1" y2="194.4" stroke="#cdd3e6" stroke-width="1.72"/>
<line x1="169.3" y1="196.7" x2="171.1" y2="197.8" stroke="#cdd3e6" stroke-width="1.72"/>
<line x1="169.3" y1="200.2" x2="171.1" y2="201.3" stroke="#cdd3e6" stroke-width="1.72"/>
<line x1="169.3" y1="203.6" x2="171.1" y2="204.7" stroke="#cdd3e6" stroke-width="1.72"/>
<line x1="169.3" y1="207.0" x2="171.1" y2="208.1" stroke="#cdd3e6" stroke-width="1.72"/>
<line x1="169.3" y1="210.5" x2="171.1" y2="211.6" stroke="#cdd3e6" stroke-width="1.72"/>
<line x1="169.3" y1="213.9" x2="171.1" y2="215.0" stroke="#cdd3e6" stroke-width="1.72"/>
<line x1="169.3" y1="217.4" x2="171.1" y2="218.5" stroke="#cdd3e6" stroke-width="1.72"/>
<line x1="169.3" y1="220.8" x2="171.1" y2="221.9" stroke="#cdd3e6" stroke-width="1.72"/>
<line x1="169.3" y1="224.2" x2="171.1" y2="225.3" stroke="#cdd3e6" stroke-width="1.72"/>
<line x1="169.3" y1="227.7" x2="171.1" y2="228.8" stroke="#cdd3e6" stroke-width="1.72"/>
<line x1="169.3" y1="231.1" x2="171.1" y2="232.2" stroke="#cdd3e6" stroke-width="1.72"/>
<line x1="169.3" y1="234.5" x2="171.1" y2="235.6" stroke="#cdd3e6" stroke-width="1.72"/>
<line x1="169.3" y1="238.0" x2="171.1" y2="239.1" stroke="#cdd3e6" stroke-width="1.72"/>
<line x1="169.3" y1="241.4" x2="171.1" y2="242.5" stroke="#cdd3e6" stroke-width="1.72"/>
<line x1="169.3" y1="244.9" x2="171.1" y2="246.0" stroke="#cdd3e6" stroke-width="1.72"/>
<line x1="169.3" y1="248.3" x2="171.1" y2="249.4" stroke="#cdd3e6" stroke-width="1.72"/>
<line x1="169.3" y1="251.7" x2="171.1" y2="252.8" stroke="#cdd3e6" stroke-width="1.72"/>
<line x1="169.3" y1="255.2" x2="171.1" y2="256.3" stroke="#cdd3e6" stroke-width="1.72"/>
<line x1="169.3" y1="258.6" x2="171.1" y2="259.7" stroke="#cdd3e6" stroke-width="1.72"/>
<line x1="169.3" y1="262.0" x2="171.1" y2="263.1" stroke="#cdd3e6" stroke-width="1.72"/>
<line x1="169.3" y1="265.5" x2="171.1" y2="266.6" stroke="#cdd3e6" stroke-width="1.72"/>
</g>
<polygon points="171.0,157.0 181.5,164.0 181.5,276.0 169.4,267.0" fill="#96784f"/>
<clipPath id="c2"><polygon points="171.0,157.0 181.5,164.0 181.5,276.0 169.4,267.0"/></clipPath>
<g clip-path="url(#c2)"><g filter="url(#bl)">
<line x1="171.0" y1="158.8" x2="181.5" y2="165.9" stroke="#c2a271" stroke-width="1.85"/>
<line x1="170.9" y1="162.5" x2="181.5" y2="169.6" stroke="#c2a271" stroke-width="1.85"/>
<line x1="170.9" y1="166.2" x2="181.5" y2="173.3" stroke="#c2a271" stroke-width="1.85"/>
<line x1="170.8" y1="169.8" x2="181.5" y2="177.1" stroke="#c2a271" stroke-width="1.85"/>
<line x1="170.8" y1="173.5" x2="181.5" y2="180.8" stroke="#c2a271" stroke-width="1.85"/>
<line x1="170.7" y1="177.2" x2="181.5" y2="184.5" stroke="#c2a271" stroke-width="1.85"/>
<line x1="170.7" y1="180.8" x2="181.5" y2="188.3" stroke="#c2a271" stroke-width="1.85"/>
<line x1="170.6" y1="184.5" x2="181.5" y2="192.0" stroke="#c2a271" stroke-width="1.85"/>
<line x1="170.5" y1="188.2" x2="181.5" y2="195.7" stroke="#c2a271" stroke-width="1.85"/>
<line x1="170.5" y1="191.8" x2="181.5" y2="199.5" stroke="#c2a271" stroke-width="1.85"/>
<line x1="170.4" y1="195.5" x2="181.5" y2="203.2" stroke="#c2a271" stroke-width="1.85"/>
<line x1="170.4" y1="199.2" x2="181.5" y2="206.9" stroke="#c2a271" stroke-width="1.85"/>
<line x1="170.3" y1="202.8" x2="181.5" y2="210.7" stroke="#c2a271" stroke-width="1.85"/>
<line x1="170.3" y1="206.5" x2="181.5" y2="214.4" stroke="#c2a271" stroke-width="1.85"/>
<line x1="170.2" y1="210.2" x2="181.5" y2="218.1" stroke="#c2a271" stroke-width="1.85"/>
<line x1="170.2" y1="213.8" x2="181.5" y2="221.9" stroke="#c2a271" stroke-width="1.85"/>
<line x1="170.1" y1="217.5" x2="181.5" y2="225.6" stroke="#c2a271" stroke-width="1.85"/>
<line x1="170.1" y1="221.2" x2="181.5" y2="229.3" stroke="#c2a271" stroke-width="1.85"/>
<line x1="170.0" y1="224.8" x2="181.5" y2="233.1" stroke="#c2a271" stroke-width="1.85"/>
<line x1="170.0" y1="228.5" x2="181.5" y2="236.8" stroke="#c2a271" stroke-width="1.85"/>
<line x1="169.9" y1="232.2" x2="181.5" y2="240.5" stroke="#c2a271" stroke-width="1.85"/>
<line x1="169.9" y1="235.8" x2="181.5" y2="244.3" stroke="#c2a271" stroke-width="1.85"/>
<line x1="169.8" y1="239.5" x2="181.5" y2="248.0" stroke="#c2a271" stroke-width="1.85"/>
<line x1="169.7" y1="243.2" x2="181.5" y2="251.7" stroke="#c2a271" stroke-width="1.85"/>
<line x1="169.7" y1="246.8" x2="181.5" y2="255.5" stroke="#c2a271" stroke-width="1.85"/>
<line x1="169.6" y1="250.5" x2="181.5" y2="259.2" stroke="#c2a271" stroke-width="1.85"/>
<line x1="169.6" y1="254.2" x2="181.5" y2="262.9" stroke="#c2a271" stroke-width="1.85"/>
<line x1="169.5" y1="257.8" x2="181.5" y2="266.7" stroke="#c2a271" stroke-width="1.85"/>
<line x1="169.5" y1="261.5" x2="181.5" y2="270.4" stroke="#c2a271" stroke-width="1.85"/>
<line x1="169.4" y1="265.2" x2="181.5" y2="274.1" stroke="#c2a271" stroke-width="1.85"/>
</g></g>
<polygon points="171.0,157.0 181.5,164.3 274.0,120.8 264.0,113.5" fill="#a1b7c8"/>
<line x1="181.5" y1="164.6" x2="274.0" y2="121.1" stroke="#d39a4a" stroke-width="1.4"/>
<polygon points="180.2,145.3 189.6,141.0 194.0,145.2 185.5,148.6" fill="#a9bfd0"/>
<polygon points="180.2,145.3 185.5,148.6 185.5,153.6 180.2,150.3" fill="#b5ad86"/>
<polygon points="185.5,148.6 194.0,145.2 194.0,150.2 185.5,153.6" fill="#efe79a"/>
<polygon points="211.0,131.0 220.2,126.8 224.5,130.9 216.1,134.3" fill="#a9bfd0"/>
<polygon points="211.0,131.0 216.1,134.3 216.1,139.3 211.0,136.0" fill="#b5ad86"/>
<polygon points="216.1,134.3 224.5,130.9 224.5,135.9 216.1,139.3" fill="#efe79a"/>
<polygon points="241.0,117.3 250.2,113.0 254.5,117.2 246.1,120.6" fill="#a9bfd0"/>
<polygon points="241.0,117.3 246.1,120.6 246.1,125.6 241.0,122.3" fill="#b5ad86"/>
<polygon points="246.1,120.6 254.5,117.2 254.5,122.2 246.1,125.6" fill="#efe79a"/>
<polygon points="204.0,267.0 246.4,249.8 246.4,260.8 211.0,274.6" fill="#dba96b"/>
<line x1="206.9" y1="270.2" x2="246.4" y2="254.4" stroke="#f3e6cf" stroke-width="0.6"/>
<line x1="209.2" y1="272.6" x2="246.4" y2="257.9" stroke="#f3e6cf" stroke-width="0.6"/>
<polygon points="210.0,274.8 246.4,260.4 246.4,299.0" fill="#4f8c37"/>
<polygon points="227.2,283.8 246.4,275.0 246.4,288.2 238.5,291.4" fill="#efe79a"/>
<polygon points="181.0,275.8 204.0,267.6 208.5,272.6 246.4,298.0 246.4,317.6 182.5,276.6" fill="#a1b7c8"/>
<line x1="191.0" y1="280.4" x2="209.0" y2="273.0" stroke="#f0f4fa" stroke-width="0.9"/>
<polygon points="169.0,266.0 183.0,276.2 246.4,317.0 257.5,326.4 256.2,338.0 168.3,280.0" fill="#8a6a46"/>
<line x1="168.6" y1="271.5" x2="256.0" y2="330.5" stroke="#c9a070" stroke-width="0.5"/>
<line x1="168.5" y1="276.0" x2="256.0" y2="334.5" stroke="#c9a070" stroke-width="0.5"/>
<line x1="168.3" y1="280.3" x2="256.2" y2="338.3" stroke="#b9b6c8" stroke-width="0.6"/>
<polygon points="393.8,163.8 476.5,124.4 476.5,213.5 393.8,252.0" fill="#4783a2"/>
<clipPath id="c3"><polygon points="393.8,163.8 476.5,124.4 476.5,213.5 393.8,252.0"/></clipPath>
<g clip-path="url(#c3)"><g filter="url(#bl)">
<line x1="393.8" y1="165.2" x2="476.5" y2="125.8" stroke="#e9ecf6" stroke-width="1.37"/>
<line x1="393.8" y1="168.0" x2="476.5" y2="128.7" stroke="#e9ecf6" stroke-width="1.37"/>
<line x1="393.8" y1="170.9" x2="476.5" y2="131.6" stroke="#e9ecf6" stroke-width="1.37"/>
<line x1="393.8" y1="173.7" x2="476.5" y2="134.5" stroke="#e9ecf6" stroke-width="1.37"/>
<line x1="393.8" y1="176.6" x2="476.5" y2="137.3" stroke="#e9ecf6" stroke-width="1.37"/>
<line x1="393.8" y1="179.4" x2="476.5" y2="140.2" stroke="#e9ecf6" stroke-width="1.37"/>
<line x1="393.8" y1="182.3" x2="476.5" y2="143.1" stroke="#e9ecf6" stroke-width="1.37"/>
<line x1="393.8" y1="185.1" x2="476.5" y2="146.0" stroke="#e9ecf6" stroke-width="1.37"/>
<line x1="393.8" y1="187.9" x2="476.5" y2="148.8" stroke="#e9ecf6" stroke-width="1.37"/>
<line x1="393.8" y1="190.8" x2="476.5" y2="151.7" stroke="#e9ecf6" stroke-width="1.37"/>
<line x1="393.8" y1="193.6" x2="476.5" y2="154.6" stroke="#e9ecf6" stroke-width="1.37"/>
<line x1="393.8" y1="196.5" x2="476.5" y2="157.5" stroke="#e9ecf6" stroke-width="1.37"/>
<line x1="393.8" y1="199.3" x2="476.5" y2="160.3" stroke="#e9ecf6" stroke-width="1.37"/>
<line x1="393.8" y1="202.2" x2="476.5" y2="163.2" stroke="#e9ecf6" stroke-width="1.37"/>
<line x1="393.8" y1="205.0" x2="476.5" y2="166.1" stroke="#e9ecf6" stroke-width="1.37"/>
<line x1="393.8" y1="207.9" x2="476.5" y2="168.9" stroke="#e9ecf6" stroke-width="1.37"/>
<line x1="393.8" y1="210.7" x2="476.5" y2="171.8" stroke="#e9ecf6" stroke-width="1.37"/>
<line x1="393.8" y1="213.6" x2="476.5" y2="174.7" stroke="#e9ecf6" stroke-width="1.37"/>
<line x1="393.8" y1="216.4" x2="476.5" y2="177.6" stroke="#e9ecf6" stroke-width="1.37"/>
<line x1="393.8" y1="219.3" x2="476.5" y2="180.4" stroke="#e9ecf6" stroke-width="1.37"/>
<line x1="393.8" y1="222.1" x2="476.5" y2="183.3" stroke="#e9ecf6" stroke-width="1.37"/>
<line x1="393.8" y1="225.0" x2="476.5" y2="186.2" stroke="#e9ecf6" stroke-width="1.37"/>
<line x1="393.8" y1="227.8" x2="476.5" y2="189.1" stroke="#e9ecf6" stroke-width="1.37"/>
<line x1="393.8" y1="230.6" x2="476.5" y2="191.9" stroke="#e9ecf6" stroke-width="1.37"/>
<line x1="393.8" y1="233.5" x2="476.5" y2="194.8" stroke="#e9ecf6" stroke-width="1.37"/>
<line x1="393.8" y1="236.3" x2="476.5" y2="197.7" stroke="#e9ecf6" stroke-width="1.37"/>
<line x1="393.8" y1="239.2" x2="476.5" y2="200.6" stroke="#e9ecf6" stroke-width="1.37"/>
<line x1="393.8" y1="242.0" x2="476.5" y2="203.4" stroke="#e9ecf6" stroke-width="1.37"/>
<line x1="393.8" y1="244.9" x2="476.5" y2="206.3" stroke="#e9ecf6" stroke-width="1.37"/>
<line x1="393.8" y1="247.7" x2="476.5" y2="209.2" stroke="#e9ecf6" stroke-width="1.37"/>
<line x1="393.8" y1="250.6" x2="476.5" y2="212.1" stroke="#e9ecf6" stroke-width="1.37"/>
<line x1="393.8" y1="163.8" x2="393.8" y2="252.0" stroke="#d39f60" stroke-width="1.1"/>
<line x1="411.1" y1="155.5" x2="411.1" y2="243.9" stroke="#d39f60" stroke-width="1.1"/>
<line x1="432.5" y1="145.3" x2="432.5" y2="234.0" stroke="#d39f60" stroke-width="1.1"/>
<line x1="438.8" y1="142.3" x2="438.8" y2="231.1" stroke="#d39f60" stroke-width="1.1"/>
<line x1="453.7" y1="135.2" x2="453.7" y2="224.1" stroke="#d39f60" stroke-width="1.1"/>
<line x1="469.9" y1="127.5" x2="469.9" y2="216.6" stroke="#d39f60" stroke-width="1.1"/>
<line x1="476.1" y1="124.6" x2="476.1" y2="213.7" stroke="#d39f60" stroke-width="1.1"/>
<polygon points="403.0,159.3 407.5,157.2 407.5,245.6 403.0,247.7" fill="#8a6a46"/>
<line x1="403.0" y1="159.5" x2="407.5" y2="159.9" stroke="#c4a274" stroke-width="1.2"/>
<line x1="403.0" y1="162.3" x2="407.5" y2="162.8" stroke="#c4a274" stroke-width="1.2"/>
<line x1="403.0" y1="165.2" x2="407.5" y2="165.6" stroke="#c4a274" stroke-width="1.2"/>
<line x1="403.0" y1="168.0" x2="407.5" y2="168.5" stroke="#c4a274" stroke-width="1.2"/>
<line x1="403.0" y1="170.9" x2="407.5" y2="171.3" stroke="#c4a274" stroke-width="1.2"/>
<line x1="403.0" y1="173.7" x2="407.5" y2="174.2" stroke="#c4a274" stroke-width="1.2"/>
<line x1="403.0" y1="176.6" x2="407.5" y2="177.1" stroke="#c4a274" stroke-width="1.2"/>
<line x1="403.0" y1="179.4" x2="407.5" y2="179.9" stroke="#c4a274" stroke-width="1.2"/>
<line x1="403.0" y1="182.3" x2="407.5" y2="182.8" stroke="#c4a274" stroke-width="1.2"/>
<line x1="403.0" y1="185.1" x2="407.5" y2="185.6" stroke="#c4a274" stroke-width="1.2"/>
<line x1="403.0" y1="188.0" x2="407.5" y2="188.5" stroke="#c4a274" stroke-width="1.2"/>
<line x1="403.0" y1="190.8" x2="407.5" y2="191.3" stroke="#c4a274" stroke-width="1.2"/>
<line x1="403.0" y1="193.7" x2="407.5" y2="194.2" stroke="#c4a274" stroke-width="1.2"/>
<line x1="403.0" y1="196.5" x2="407.5" y2="197.0" stroke="#c4a274" stroke-width="1.2"/>
<line x1="403.0" y1="199.4" x2="407.5" y2="199.9" stroke="#c4a274" stroke-width="1.2"/>
<line x1="403.0" y1="202.2" x2="407.5" y2="202.7" stroke="#c4a274" stroke-width="1.2"/>
<line x1="403.0" y1="205.1" x2="407.5" y2="205.6" stroke="#c4a274" stroke-width="1.2"/>
<line x1="403.0" y1="207.9" x2="407.5" y2="208.4" stroke="#c4a274" stroke-width="1.2"/>
<line x1="403.0" y1="210.8" x2="407.5" y2="211.3" stroke="#c4a274" stroke-width="1.2"/>
<line x1="403.0" y1="213.6" x2="407.5" y2="214.1" stroke="#c4a274" stroke-width="1.2"/>
<line x1="403.0" y1="216.5" x2="407.5" y2="217.0" stroke="#c4a274" stroke-width="1.2"/>
<line x1="403.0" y1="219.3" x2="407.5" y2="219.8" stroke="#c4a274" stroke-width="1.2"/>
<line x1="403.0" y1="222.2" x2="407.5" y2="222.7" stroke="#c4a274" stroke-width="1.2"/>
<line x1="403.0" y1="225.0" x2="407.5" y2="225.5" stroke="#c4a274" stroke-width="1.2"/>
<line x1="403.0" y1="227.9" x2="407.5" y2="228.4" stroke="#c4a274" stroke-width="1.2"/>
<line x1="403.0" y1="230.7" x2="407.5" y2="231.2" stroke="#c4a274" stroke-width="1.2"/>
<line x1="403.0" y1="233.6" x2="407.5" y2="234.1" stroke="#c4a274" stroke-width="1.2"/>
<line x1="403.0" y1="236.4" x2="407.5" y2="236.9" stroke="#c4a274" stroke-width="1.2"/>
<line x1="403.0" y1="239.3" x2="407.5" y2="239.8" stroke="#c4a274" stroke-width="1.2"/>
<line x1="403.0" y1="242.1" x2="407.5" y2="242.6" stroke="#c4a274" stroke-width="1.2"/>
<line x1="403.0" y1="245.0" x2="407.5" y2="245.5" stroke="#c4a274" stroke-width="1.2"/>
<polygon points="417.5,152.5 420.7,150.9 420.7,239.4 417.5,241.0" fill="#8a6a46"/>
<line x1="417.5" y1="152.6" x2="420.7" y2="153.6" stroke="#c4a274" stroke-width="1.2"/>
<line x1="417.5" y1="155.4" x2="420.7" y2="156.5" stroke="#c4a274" stroke-width="1.2"/>
<line x1="417.5" y1="158.3" x2="420.7" y2="159.4" stroke="#c4a274" stroke-width="1.2"/>
<line x1="417.5" y1="161.1" x2="420.7" y2="162.2" stroke="#c4a274" stroke-width="1.2"/>
<line x1="417.5" y1="164.0" x2="420.7" y2="165.1" stroke="#c4a274" stroke-width="1.2"/>
<line x1="417.5" y1="166.9" x2="420.7" y2="167.9" stroke="#c4a274" stroke-width="1.2"/>
<line x1="417.5" y1="169.7" x2="420.7" y2="170.8" stroke="#c4a274" stroke-width="1.2"/>
<line x1="417.5" y1="172.6" x2="420.7" y2="173.6" stroke="#c4a274" stroke-width="1.2"/>
<line x1="417.5" y1="175.4" x2="420.7" y2="176.5" stroke="#c4a274" stroke-width="1.2"/>
<line x1="417.5" y1="178.3" x2="420.7" y2="179.4" stroke="#c4a274" stroke-width="1.2"/>
<line x1="417.5" y1="181.1" x2="420.7" y2="182.2" stroke="#c4a274" stroke-width="1.2"/>
<line x1="417.5" y1="184.0" x2="420.7" y2="185.1" stroke="#c4a274" stroke-width="1.2"/>
<line x1="417.5" y1="186.8" x2="420.7" y2="187.9" stroke="#c4a274" stroke-width="1.2"/>
<line x1="417.5" y1="189.7" x2="420.7" y2="190.8" stroke="#c4a274" stroke-width="1.2"/>
<line x1="417.5" y1="192.5" x2="420.7" y2="193.6" stroke="#c4a274" stroke-width="1.2"/>
<line x1="417.5" y1="195.4" x2="420.7" y2="196.5" stroke="#c4a274" stroke-width="1.2"/>
<line x1="417.5" y1="198.3" x2="420.7" y2="199.3" stroke="#c4a274" stroke-width="1.2"/>
<line x1="417.5" y1="201.1" x2="420.7" y2="202.2" stroke="#c4a274" stroke-width="1.2"/>
<line x1="417.5" y1="204.0" x2="420.7" y2="205.1" stroke="#c4a274" stroke-width="1.2"/>
<line x1="417.5" y1="206.8" x2="420.7" y2="207.9" stroke="#c4a274" stroke-width="1.2"/>
<line x1="417.5" y1="209.7" x2="420.7" y2="210.8" stroke="#c4a274" stroke-width="1.2"/>
<line x1="417.5" y1="212.5" x2="420.7" y2="213.6" stroke="#c4a274" stroke-width="1.2"/>
<line x1="417.5" y1="215.4" x2="420.7" y2="216.5" stroke="#c4a274" stroke-width="1.2"/>
<line x1="417.5" y1="218.2" x2="420.7" y2="219.3" stroke="#c4a274" stroke-width="1.2"/>
<line x1="417.5" y1="221.1" x2="420.7" y2="222.2" stroke="#c4a274" stroke-width="1.2"/>
<line x1="417.5" y1="223.9" x2="420.7" y2="225.0" stroke="#c4a274" stroke-width="1.2"/>
<line x1="417.5" y1="226.8" x2="420.7" y2="227.9" stroke="#c4a274" stroke-width="1.2"/>
<line x1="417.5" y1="229.7" x2="420.7" y2="230.8" stroke="#c4a274" stroke-width="1.2"/>
<line x1="417.5" y1="232.5" x2="420.7" y2="233.6" stroke="#c4a274" stroke-width="1.2"/>
<line x1="417.5" y1="235.4" x2="420.7" y2="236.5" stroke="#c4a274" stroke-width="1.2"/>
<line x1="417.5" y1="238.2" x2="420.7" y2="239.3" stroke="#c4a274" stroke-width="1.2"/>
<polygon points="445.0,139.4 450.0,137.0 450.0,225.8 445.0,228.2" fill="#8a6a46"/>
<line x1="445.0" y1="139.5" x2="450.0" y2="139.7" stroke="#c4a274" stroke-width="1.2"/>
<line x1="445.0" y1="142.4" x2="450.0" y2="142.6" stroke="#c4a274" stroke-width="1.2"/>
<line x1="445.0" y1="145.3" x2="450.0" y2="145.5" stroke="#c4a274" stroke-width="1.2"/>
<line x1="445.0" y1="148.1" x2="450.0" y2="148.3" stroke="#c4a274" stroke-width="1.2"/>
<line x1="445.0" y1="151.0" x2="450.0" y2="151.2" stroke="#c4a274" stroke-width="1.2"/>
<line x1="445.0" y1="153.8" x2="450.0" y2="154.1" stroke="#c4a274" stroke-width="1.2"/>
<line x1="445.0" y1="156.7" x2="450.0" y2="156.9" stroke="#c4a274" stroke-width="1.2"/>
<line x1="445.0" y1="159.6" x2="450.0" y2="159.8" stroke="#c4a274" stroke-width="1.2"/>
<line x1="445.0" y1="162.4" x2="450.0" y2="162.6" stroke="#c4a274" stroke-width="1.2"/>
<line x1="445.0" y1="165.3" x2="450.0" y2="165.5" stroke="#c4a274" stroke-width="1.2"/>
<line x1="445.0" y1="168.2" x2="450.0" y2="168.4" stroke="#c4a274" stroke-width="1.2"/>
<line x1="445.0" y1="171.0" x2="450.0" y2="171.2" stroke="#c4a274" stroke-width="1.2"/>
<line x1="445.0" y1="173.9" x2="450.0" y2="174.1" stroke="#c4a274" stroke-width="1.2"/>
<line x1="445.0" y1="176.8" x2="450.0" y2="177.0" stroke="#c4a274" stroke-width="1.2"/>
<line x1="445.0" y1="179.6" x2="450.0" y2="179.8" stroke="#c4a274" stroke-width="1.2"/>
<line x1="445.0" y1="182.5" x2="450.0" y2="182.7" stroke="#c4a274" stroke-width="1.2"/>
<line x1="445.0" y1="185.3" x2="450.0" y2="185.6" stroke="#c4a274" stroke-width="1.2"/>
<line x1="445.0" y1="188.2" x2="450.0" y2="188.4" stroke="#c4a274" stroke-width="1.2"/>
<line x1="445.0" y1="191.1" x2="450.0" y2="191.3" stroke="#c4a274" stroke-width="1.2"/>
<line x1="445.0" y1="193.9" x2="450.0" y2="194.2" stroke="#c4a274" stroke-width="1.2"/>
<line x1="445.0" y1="196.8" x2="450.0" y2="197.0" stroke="#c4a274" stroke-width="1.2"/>
<line x1="445.0" y1="199.7" x2="450.0" y2="199.9" stroke="#c4a274" stroke-width="1.2"/>
<line x1="445.0" y1="202.5" x2="450.0" y2="202.8" stroke="#c4a274" stroke-width="1.2"/>
<line x1="445.0" y1="205.4" x2="450.0" y2="205.6" stroke="#c4a274" stroke-width="1.2"/>
<line x1="445.0" y1="208.3" x2="450.0" y2="208.5" stroke="#c4a274" stroke-width="1.2"/>
<line x1="445.0" y1="211.1" x2="450.0" y2="211.4" stroke="#c4a274" stroke-width="1.2"/>
<line x1="445.0" y1="214.0" x2="450.0" y2="214.2" stroke="#c4a274" stroke-width="1.2"/>
<line x1="445.0" y1="216.8" x2="450.0" y2="217.1" stroke="#c4a274" stroke-width="1.2"/>
<line x1="445.0" y1="219.7" x2="450.0" y2="220.0" stroke="#c4a274" stroke-width="1.2"/>
<line x1="445.0" y1="222.6" x2="450.0" y2="222.8" stroke="#c4a274" stroke-width="1.2"/>
<line x1="445.0" y1="225.4" x2="450.0" y2="225.7" stroke="#c4a274" stroke-width="1.2"/>
<polygon points="459.9,132.3 462.6,131.0 462.6,220.0 459.9,221.2" fill="#8a6a46"/>
<line x1="459.9" y1="132.4" x2="462.6" y2="133.7" stroke="#c4a274" stroke-width="1.2"/>
<line x1="459.9" y1="135.3" x2="462.6" y2="136.6" stroke="#c4a274" stroke-width="1.2"/>
<line x1="459.9" y1="138.1" x2="462.6" y2="139.5" stroke="#c4a274" stroke-width="1.2"/>
<line x1="459.9" y1="141.0" x2="462.6" y2="142.4" stroke="#c4a274" stroke-width="1.2"/>
<line x1="459.9" y1="143.9" x2="462.6" y2="145.2" stroke="#c4a274" stroke-width="1.2"/>
<line x1="459.9" y1="146.7" x2="462.6" y2="148.1" stroke="#c4a274" stroke-width="1.2"/>
<line x1="459.9" y1="149.6" x2="462.6" y2="151.0" stroke="#c4a274" stroke-width="1.2"/>
<line x1="459.9" y1="152.5" x2="462.6" y2="153.8" stroke="#c4a274" stroke-width="1.2"/>
<line x1="459.9" y1="155.4" x2="462.6" y2="156.7" stroke="#c4a274" stroke-width="1.2"/>
<line x1="459.9" y1="158.2" x2="462.6" y2="159.6" stroke="#c4a274" stroke-width="1.2"/>
<line x1="459.9" y1="161.1" x2="462.6" y2="162.4" stroke="#c4a274" stroke-width="1.2"/>
<line x1="459.9" y1="164.0" x2="462.6" y2="165.3" stroke="#c4a274" stroke-width="1.2"/>
<line x1="459.9" y1="166.8" x2="462.6" y2="168.2" stroke="#c4a274" stroke-width="1.2"/>
<line x1="459.9" y1="169.7" x2="462.6" y2="171.1" stroke="#c4a274" stroke-width="1.2"/>
<line x1="459.9" y1="172.6" x2="462.6" y2="173.9" stroke="#c4a274" stroke-width="1.2"/>
<line x1="459.9" y1="175.4" x2="462.6" y2="176.8" stroke="#c4a274" stroke-width="1.2"/>
<line x1="459.9" y1="178.3" x2="462.6" y2="179.7" stroke="#c4a274" stroke-width="1.2"/>
<line x1="459.9" y1="181.2" x2="462.6" y2="182.5" stroke="#c4a274" stroke-width="1.2"/>
<line x1="459.9" y1="184.0" x2="462.6" y2="185.4" stroke="#c4a274" stroke-width="1.2"/>
<line x1="459.9" y1="186.9" x2="462.6" y2="188.3" stroke="#c4a274" stroke-width="1.2"/>
<line x1="459.9" y1="189.8" x2="462.6" y2="191.1" stroke="#c4a274" stroke-width="1.2"/>
<line x1="459.9" y1="192.6" x2="462.6" y2="194.0" stroke="#c4a274" stroke-width="1.2"/>
<line x1="459.9" y1="195.5" x2="462.6" y2="196.9" stroke="#c4a274" stroke-width="1.2"/>
<line x1="459.9" y1="198.4" x2="462.6" y2="199.7" stroke="#c4a274" stroke-width="1.2"/>
<line x1="459.9" y1="201.3" x2="462.6" y2="202.6" stroke="#c4a274" stroke-width="1.2"/>
<line x1="459.9" y1="204.1" x2="462.6" y2="205.5" stroke="#c4a274" stroke-width="1.2"/>
<line x1="459.9" y1="207.0" x2="462.6" y2="208.4" stroke="#c4a274" stroke-width="1.2"/>
<line x1="459.9" y1="209.9" x2="462.6" y2="211.2" stroke="#c4a274" stroke-width="1.2"/>
<line x1="459.9" y1="212.7" x2="462.6" y2="214.1" stroke="#c4a274" stroke-width="1.2"/>
<line x1="459.9" y1="215.6" x2="462.6" y2="217.0" stroke="#c4a274" stroke-width="1.2"/>
<line x1="459.9" y1="218.5" x2="462.6" y2="219.8" stroke="#c4a274" stroke-width="1.2"/>
</g></g>
<g filter="url(#bl)">
<line x1="382.8" y1="158.6" x2="384.3" y2="159.7" stroke="#cdd3e6" stroke-width="1.41"/>
<line x1="382.8" y1="161.4" x2="384.3" y2="162.5" stroke="#cdd3e6" stroke-width="1.41"/>
<line x1="382.8" y1="164.2" x2="384.3" y2="165.3" stroke="#cdd3e6" stroke-width="1.41"/>
<line x1="382.8" y1="167.0" x2="384.3" y2="168.1" stroke="#cdd3e6" stroke-width="1.41"/>
<line x1="382.8" y1="169.9" x2="384.3" y2="171.0" stroke="#cdd3e6" stroke-width="1.41"/>
<line x1="382.8" y1="172.7" x2="384.3" y2="173.8" stroke="#cdd3e6" stroke-width="1.41"/>
<line x1="382.8" y1="175.5" x2="384.3" y2="176.6" stroke="#cdd3e6" stroke-width="1.41"/>
<line x1="382.8" y1="178.3" x2="384.3" y2="179.4" stroke="#cdd3e6" stroke-width="1.41"/>
<line x1="382.8" y1="181.1" x2="384.3" y2="182.2" stroke="#cdd3e6" stroke-width="1.41"/>
<line x1="382.8" y1="183.9" x2="384.3" y2="185.0" stroke="#cdd3e6" stroke-width="1.41"/>
<line x1="382.8" y1="186.7" x2="384.3" y2="187.8" stroke="#cdd3e6" stroke-width="1.41"/>
<line x1="382.8" y1="189.5" x2="384.3" y2="190.6" stroke="#cdd3e6" stroke-width="1.41"/>
<line x1="382.8" y1="192.4" x2="384.3" y2="193.5" stroke="#cdd3e6" stroke-width="1.41"/>
<line x1="382.8" y1="195.2" x2="384.3" y2="196.3" stroke="#cdd3e6" stroke-width="1.41"/>
<line x1="382.8" y1="198.0" x2="384.3" y2="199.1" stroke="#cdd3e6" stroke-width="1.41"/>
<line x1="382.8" y1="200.8" x2="384.3" y2="201.9" stroke="#cdd3e6" stroke-width="1.41"/>
<line x1="382.8" y1="203.6" x2="384.3" y2="204.7" stroke="#cdd3e6" stroke-width="1.41"/>
<line x1="382.8" y1="206.4" x2="384.3" y2="207.5" stroke="#cdd3e6" stroke-width="1.41"/>
<line x1="382.8" y1="209.2" x2="384.3" y2="210.3" stroke="#cdd3e6" stroke-width="1.41"/>
<line x1="382.8" y1="212.0" x2="384.3" y2="213.1" stroke="#cdd3e6" stroke-width="1.41"/>
<line x1="382.8" y1="214.9" x2="384.3" y2="216.0" stroke="#cdd3e6" stroke-width="1.41"/>
<line x1="382.8" y1="217.7" x2="384.3" y2="218.8" stroke="#cdd3e6" stroke-width="1.41"/>
<line x1="382.8" y1="220.5" x2="384.3" y2="221.6" stroke="#cdd3e6" stroke-width="1.41"/>
<line x1="382.8" y1="223.3" x2="384.3" y2="224.4" stroke="#cdd3e6" stroke-width="1.41"/>
<line x1="382.8" y1="226.1" x2="384.3" y2="227.2" stroke="#cdd3e6" stroke-width="1.41"/>
<line x1="382.8" y1="228.9" x2="384.3" y2="230.0" stroke="#cdd3e6" stroke-width="1.41"/>
<line x1="382.8" y1="231.7" x2="384.3" y2="232.8" stroke="#cdd3e6" stroke-width="1.41"/>
<line x1="382.8" y1="234.5" x2="384.3" y2="235.6" stroke="#cdd3e6" stroke-width="1.41"/>
<line x1="382.8" y1="237.4" x2="384.3" y2="238.5" stroke="#cdd3e6" stroke-width="1.41"/>
<line x1="382.8" y1="240.2" x2="384.3" y2="241.3" stroke="#cdd3e6" stroke-width="1.41"/>
<line x1="382.8" y1="243.0" x2="384.3" y2="244.1" stroke="#cdd3e6" stroke-width="1.41"/>
<line x1="382.8" y1="245.8" x2="384.3" y2="246.9" stroke="#cdd3e6" stroke-width="1.41"/>
</g>
<polygon points="383.8,157.0 393.8,163.8 393.8,254.0 383.8,248.0" fill="#96784f"/>
<clipPath id="c4"><polygon points="383.8,157.0 393.8,163.8 393.8,254.0 383.8,248.0"/></clipPath>
<g clip-path="url(#c4)"><g filter="url(#bl)">
<line x1="383.8" y1="158.5" x2="393.8" y2="165.3" stroke="#c2a271" stroke-width="1.51"/>
<line x1="383.8" y1="161.6" x2="393.8" y2="168.3" stroke="#c2a271" stroke-width="1.51"/>
<line x1="383.8" y1="164.6" x2="393.8" y2="171.3" stroke="#c2a271" stroke-width="1.51"/>
<line x1="383.8" y1="167.6" x2="393.8" y2="174.3" stroke="#c2a271" stroke-width="1.51"/>
<line x1="383.8" y1="170.7" x2="393.8" y2="177.3" stroke="#c2a271" stroke-width="1.51"/>
<line x1="383.8" y1="173.7" x2="393.8" y2="180.3" stroke="#c2a271" stroke-width="1.51"/>
<line x1="383.8" y1="176.7" x2="393.8" y2="183.3" stroke="#c2a271" stroke-width="1.51"/>
<line x1="383.8" y1="179.8" x2="393.8" y2="186.3" stroke="#c2a271" stroke-width="1.51"/>
<line x1="383.8" y1="182.8" x2="393.8" y2="189.3" stroke="#c2a271" stroke-width="1.51"/>
<line x1="383.8" y1="185.8" x2="393.8" y2="192.3" stroke="#c2a271" stroke-width="1.51"/>
<line x1="383.8" y1="188.8" x2="393.8" y2="195.3" stroke="#c2a271" stroke-width="1.51"/>
<line x1="383.8" y1="191.9" x2="393.8" y2="198.3" stroke="#c2a271" stroke-width="1.51"/>
<line x1="383.8" y1="194.9" x2="393.8" y2="201.4" stroke="#c2a271" stroke-width="1.51"/>
<line x1="383.8" y1="197.9" x2="393.8" y2="204.4" stroke="#c2a271" stroke-width="1.51"/>
<line x1="383.8" y1="201.0" x2="393.8" y2="207.4" stroke="#c2a271" stroke-width="1.51"/>
<line x1="383.8" y1="204.0" x2="393.8" y2="210.4" stroke="#c2a271" stroke-width="1.51"/>
<line x1="383.8" y1="207.1" x2="393.8" y2="213.4" stroke="#c2a271" stroke-width="1.51"/>
<line x1="383.8" y1="210.1" x2="393.8" y2="216.4" stroke="#c2a271" stroke-width="1.51"/>
<line x1="383.8" y1="213.1" x2="393.8" y2="219.4" stroke="#c2a271" stroke-width="1.51"/>
<line x1="383.8" y1="216.2" x2="393.8" y2="222.4" stroke="#c2a271" stroke-width="1.51"/>
<line x1="383.8" y1="219.2" x2="393.8" y2="225.4" stroke="#c2a271" stroke-width="1.51"/>
<line x1="383.8" y1="222.2" x2="393.8" y2="228.4" stroke="#c2a271" stroke-width="1.51"/>
<line x1="383.8" y1="225.2" x2="393.8" y2="231.4" stroke="#c2a271" stroke-width="1.51"/>
<line x1="383.8" y1="228.3" x2="393.8" y2="234.4" stroke="#c2a271" stroke-width="1.51"/>
<line x1="383.8" y1="231.3" x2="393.8" y2="237.5" stroke="#c2a271" stroke-width="1.51"/>
<line x1="383.8" y1="234.3" x2="393.8" y2="240.5" stroke="#c2a271" stroke-width="1.51"/>
<line x1="383.8" y1="237.4" x2="393.8" y2="243.5" stroke="#c2a271" stroke-width="1.51"/>
<line x1="383.8" y1="240.4" x2="393.8" y2="246.5" stroke="#c2a271" stroke-width="1.51"/>
<line x1="383.8" y1="243.4" x2="393.8" y2="249.5" stroke="#c2a271" stroke-width="1.51"/>
<line x1="383.8" y1="246.5" x2="393.8" y2="252.5" stroke="#c2a271" stroke-width="1.51"/>
</g></g>
<polygon points="383.5,246.0 398.5,255.0 398.5,278.0 383.5,268.5" fill="#8a6a46"/>
<line x1="383.5" y1="254.6" x2="398.5" y2="263.7" stroke="#cfa574" stroke-width="0.5"/>
<line x1="383.5" y1="262.2" x2="398.5" y2="271.6" stroke="#cfa574" stroke-width="0.5"/>
<line x1="384.0" y1="255.0" x2="398.0" y2="263.5" stroke="#4329a0" stroke-width="1.6"/>
<line x1="383.6" y1="268.2" x2="398.4" y2="277.6" stroke="#e6dea0" stroke-width="1.1"/>
<polygon points="384.0,157.0 393.8,164.0 476.4,124.7 462.6,115.0 456.0,118.6 441.4,126.0 437.0,129.0 427.0,135.0 412.0,142.0 396.0,149.5" fill="#a1b7c8"/>
<line x1="393.8" y1="164.3" x2="476.4" y2="125.0" stroke="#d39a4a" stroke-width="1.4"/>
<polygon points="396.4,143.6 405.8,140.0 410.2,143.5 401.6,146.4" fill="#a9bfd0"/>
<polygon points="396.4,143.6 401.6,146.4 401.6,151.4 396.4,148.6" fill="#b5ad86"/>
<polygon points="401.6,146.4 410.2,143.5 410.2,148.5 401.6,151.4" fill="#efe79a"/>
<polygon points="441.0,120.0 451.2,114.4 456.0,119.9 446.7,124.4" fill="#a9bfd0"/>
<polygon points="441.0,120.0 446.7,124.4 446.7,129.7 441.0,125.3" fill="#b5ad86"/>
<polygon points="446.7,124.4 456.0,119.9 456.0,125.2 446.7,129.7" fill="#efe79a"/>
<polygon points="393.8,252.0 447.5,227.0 447.5,231.0 398.5,255.3" fill="#a1b7c8"/>
<polygon points="398.5,255.2 447.6,230.8 447.6,253.3 398.5,277.5" fill="#dba96b"/>
<line x1="398.5" y1="263.7" x2="447.6" y2="239.4" stroke="#f3e6cf" stroke-width="0.6"/>
<line x1="398.5" y1="271.3" x2="447.6" y2="247.0" stroke="#f3e6cf" stroke-width="0.6"/>
<polygon points="367.0,174.0 383.8,165.0 383.8,193.0 380.0,194.4 376.0,190.5 373.8,186.0 374.4,179.4" fill="#dba96b"/>
<polygon points="346.0,226.3 360.6,220.7 362.5,216.0 381.0,194.4 381.3,224.5 361.9,247.0 361.0,260.5 346.0,266.5" fill="#dba96b"/>
<polygon points="346.0,226.3 360.6,220.7 361.0,260.5 346.0,266.5" fill="#d5a568"/>
<line x1="346.0" y1="236.0" x2="361.5" y2="231.0" stroke="#f3e6cf" stroke-width="0.5"/>
<line x1="346.0" y1="246.0" x2="361.5" y2="241.0" stroke="#f3e6cf" stroke-width="0.5"/>
<line x1="346.0" y1="256.0" x2="361.5" y2="251.0" stroke="#f3e6cf" stroke-width="0.5"/>
<line x1="361.0" y1="231.0" x2="381.0" y2="204.0" stroke="#f3e6cf" stroke-width="0.5"/>
<line x1="361.0" y1="241.0" x2="381.0" y2="214.0" stroke="#f3e6cf" stroke-width="0.5"/>
<polygon points="361.9,247.0 381.0,224.5 381.0,192.8 383.9,192.8 383.9,259.5 361.0,254.4" fill="#4329a0"/>
<line x1="366.0" y1="247.5" x2="381.0" y2="229.5" stroke="#8f7fd0" stroke-width="0.5"/>
<line x1="370.0" y1="248.5" x2="382.0" y2="234.5" stroke="#8f7fd0" stroke-width="0.5"/>
<line x1="363.0" y1="251.5" x2="383.0" y2="256.0" stroke="#8f7fd0" stroke-width="0.5"/>
<polygon points="361.0,254.4 383.6,259.4 383.6,266.2 361.0,261.0" fill="#8a6a46"/>
<polygon points="345.6,267.0 361.0,262.0 382.5,267.5 370.0,274.4 358.8,268.0 348.0,273.0" fill="#4f8c37"/>
<polygon points="398.5,277.8 447.6,253.5 458.0,300.0 453.8,314.0" fill="#a1b7c8"/>
<line x1="398.5" y1="277.8" x2="447.6" y2="253.5" stroke="#fafafa" stroke-width="1.0"/>
<polygon points="398.5,278.0 453.2,313.8 452.5,337.0 398.5,302.8" fill="#8a6a46"/>
<line x1="398.5" y1="287.4" x2="452.9" y2="322.6" stroke="#cfa574" stroke-width="0.5"/>
<line x1="398.5" y1="295.9" x2="452.7" y2="330.5" stroke="#cfa574" stroke-width="0.5"/>
<polygon points="257.5,207.5 345.8,163.0 345.8,283.0 257.5,325.0" fill="#ddb279"/>
<clipPath id="c5"><polygon points="257.5,207.5 345.8,163.0 345.8,283.0 257.5,325.0"/></clipPath>
<g clip-path="url(#c5)"><g filter="url(#bl)">
<line x1="257.5" y1="209.5" x2="345.8" y2="165.0" stroke="#f5eee2" stroke-width="2.06"/>
<line x1="257.5" y1="213.4" x2="345.8" y2="169.0" stroke="#f5eee2" stroke-width="2.06"/>
<line x1="257.5" y1="217.3" x2="345.8" y2="173.0" stroke="#f5eee2" stroke-width="2.06"/>
<line x1="257.5" y1="221.2" x2="345.8" y2="177.0" stroke="#f5eee2" stroke-width="2.06"/>
<line x1="257.5" y1="225.1" x2="345.8" y2="181.0" stroke="#f5eee2" stroke-width="2.06"/>
<line x1="257.5" y1="229.0" x2="345.8" y2="185.0" stroke="#f5eee2" stroke-width="2.06"/>
<line x1="257.5" y1="233.0" x2="345.8" y2="189.0" stroke="#f5eee2" stroke-width="2.06"/>
<line x1="257.5" y1="236.9" x2="345.8" y2="193.0" stroke="#f5eee2" stroke-width="2.06"/>
<line x1="257.5" y1="240.8" x2="345.8" y2="197.0" stroke="#f5eee2" stroke-width="2.06"/>
<line x1="257.5" y1="244.7" x2="345.8" y2="201.0" stroke="#f5eee2" stroke-width="2.06"/>
<line x1="257.5" y1="248.6" x2="345.8" y2="205.0" stroke="#f5eee2" stroke-width="2.06"/>
<line x1="257.5" y1="252.5" x2="345.8" y2="209.0" stroke="#f5eee2" stroke-width="2.06"/>
<line x1="257.5" y1="256.5" x2="345.8" y2="213.0" stroke="#f5eee2" stroke-width="2.06"/>
<line x1="257.5" y1="260.4" x2="345.8" y2="217.0" stroke="#f5eee2" stroke-width="2.06"/>
<line x1="257.5" y1="264.3" x2="345.8" y2="221.0" stroke="#f5eee2" stroke-width="2.06"/>
<line x1="257.5" y1="268.2" x2="345.8" y2="225.0" stroke="#f5eee2" stroke-width="2.06"/>
<line x1="257.5" y1="272.1" x2="345.8" y2="229.0" stroke="#f5eee2" stroke-width="2.06"/>
<line x1="257.5" y1="276.0" x2="345.8" y2="233.0" stroke="#f5eee2" stroke-width="2.06"/>
<line x1="257.5" y1="280.0" x2="345.8" y2="237.0" stroke="#f5eee2" stroke-width="2.06"/>
<line x1="257.5" y1="283.9" x2="345.8" y2="241.0" stroke="#f5eee2" stroke-width="2.06"/>
<line x1="257.5" y1="287.8" x2="345.8" y2="245.0" stroke="#f5eee2" stroke-width="2.06"/>
<line x1="257.5" y1="291.7" x2="345.8" y2="249.0" stroke="#f5eee2" stroke-width="2.06"/>
<line x1="257.5" y1="295.6" x2="345.8" y2="253.0" stroke="#f5eee2" stroke-width="2.06"/>
<line x1="257.5" y1="299.5" x2="345.8" y2="257.0" stroke="#f5eee2" stroke-width="2.06"/>
<line x1="257.5" y1="303.5" x2="345.8" y2="261.0" stroke="#f5eee2" stroke-width="2.06"/>
<line x1="257.5" y1="307.4" x2="345.8" y2="265.0" stroke="#f5eee2" stroke-width="2.06"/>
<line x1="257.5" y1="311.3" x2="345.8" y2="269.0" stroke="#f5eee2" stroke-width="2.06"/>
<line x1="257.5" y1="315.2" x2="345.8" y2="273.0" stroke="#f5eee2" stroke-width="2.06"/>
<line x1="257.5" y1="319.1" x2="345.8" y2="277.0" stroke="#f5eee2" stroke-width="2.06"/>
<line x1="257.5" y1="323.0" x2="345.8" y2="281.0" stroke="#f5eee2" stroke-width="2.06"/>
<line x1="261.5" y1="205.5" x2="261.5" y2="323.1" stroke="#ddb279" stroke-width="2.2"/>
<line x1="269.0" y1="201.7" x2="269.0" y2="319.5" stroke="#ddb279" stroke-width="2.2"/>
<line x1="276.5" y1="197.9" x2="276.5" y2="316.0" stroke="#ddb279" stroke-width="2.2"/>
<line x1="284.0" y1="194.2" x2="284.0" y2="312.4" stroke="#ddb279" stroke-width="2.2"/>
<line x1="291.5" y1="190.4" x2="291.5" y2="308.8" stroke="#ddb279" stroke-width="2.2"/>
<line x1="299.0" y1="186.6" x2="299.0" y2="305.3" stroke="#ddb279" stroke-width="2.2"/>
<line x1="306.5" y1="182.8" x2="306.5" y2="301.7" stroke="#ddb279" stroke-width="2.2"/>
<line x1="314.0" y1="179.0" x2="314.0" y2="298.1" stroke="#ddb279" stroke-width="2.2"/>
<line x1="321.5" y1="175.2" x2="321.5" y2="294.6" stroke="#ddb279" stroke-width="2.2"/>
<line x1="329.0" y1="171.5" x2="329.0" y2="291.0" stroke="#ddb279" stroke-width="2.2"/>
<line x1="336.5" y1="167.7" x2="336.5" y2="287.4" stroke="#ddb279" stroke-width="2.2"/>
<line x1="343.6" y1="164.1" x2="343.6" y2="284.1" stroke="#ddb279" stroke-width="2.2"/>
<line x1="273.8" y1="199.3" x2="273.8" y2="317.2" stroke="#866a48" stroke-width="1.5" stroke-dasharray="1.7 1.5"/>
<line x1="311.4" y1="180.4" x2="311.4" y2="299.4" stroke="#866a48" stroke-width="1.5" stroke-dasharray="1.7 1.5"/>
<line x1="265.4" y1="203.5" x2="265.4" y2="321.2" stroke="#6f5f55" stroke-width="0.7" stroke-dasharray="1.4 2.3"/>
<line x1="288.0" y1="192.1" x2="288.0" y2="310.5" stroke="#6f5f55" stroke-width="0.7" stroke-dasharray="1.4 2.3"/>
<line x1="295.5" y1="188.4" x2="295.5" y2="306.9" stroke="#6f5f55" stroke-width="0.7" stroke-dasharray="1.4 2.3"/>
<line x1="325.5" y1="173.2" x2="325.5" y2="292.7" stroke="#6f5f55" stroke-width="0.7" stroke-dasharray="1.4 2.3"/>
<line x1="333.0" y1="169.5" x2="333.0" y2="289.1" stroke="#6f5f55" stroke-width="0.7" stroke-dasharray="1.4 2.3"/>
<line x1="344.5" y1="163.7" x2="344.5" y2="283.6" stroke="#6f5f55" stroke-width="0.7" stroke-dasharray="1.4 2.3"/>
</g></g>
<g filter="url(#bl)">
<line x1="245.4" y1="204.5" x2="247.3" y2="205.6" stroke="#cdd3e6" stroke-width="1.79"/>
<line x1="245.4" y1="208.1" x2="247.3" y2="209.2" stroke="#cdd3e6" stroke-width="1.79"/>
<line x1="245.4" y1="211.6" x2="247.3" y2="212.7" stroke="#cdd3e6" stroke-width="1.79"/>
<line x1="245.4" y1="215.2" x2="247.3" y2="216.3" stroke="#cdd3e6" stroke-width="1.79"/>
<line x1="245.4" y1="218.8" x2="247.3" y2="219.9" stroke="#cdd3e6" stroke-width="1.79"/>
<line x1="245.4" y1="222.4" x2="247.3" y2="223.5" stroke="#cdd3e6" stroke-width="1.79"/>
<line x1="245.4" y1="226.0" x2="247.3" y2="227.1" stroke="#cdd3e6" stroke-width="1.79"/>
<line x1="245.4" y1="229.5" x2="247.3" y2="230.6" stroke="#cdd3e6" stroke-width="1.79"/>
<line x1="245.4" y1="233.1" x2="247.3" y2="234.2" stroke="#cdd3e6" stroke-width="1.79"/>
<line x1="245.4" y1="236.7" x2="247.3" y2="237.8" stroke="#cdd3e6" stroke-width="1.79"/>
<line x1="245.4" y1="240.3" x2="247.3" y2="241.4" stroke="#cdd3e6" stroke-width="1.79"/>
<line x1="245.4" y1="243.8" x2="247.3" y2="244.9" stroke="#cdd3e6" stroke-width="1.79"/>
<line x1="245.4" y1="247.4" x2="247.3" y2="248.5" stroke="#cdd3e6" stroke-width="1.79"/>
<line x1="245.4" y1="251.0" x2="247.3" y2="252.1" stroke="#cdd3e6" stroke-width="1.79"/>
<line x1="245.4" y1="254.6" x2="247.3" y2="255.7" stroke="#cdd3e6" stroke-width="1.79"/>
<line x1="245.4" y1="258.2" x2="247.3" y2="259.3" stroke="#cdd3e6" stroke-width="1.79"/>
<line x1="245.4" y1="261.7" x2="247.3" y2="262.8" stroke="#cdd3e6" stroke-width="1.79"/>
<line x1="245.4" y1="265.3" x2="247.3" y2="266.4" stroke="#cdd3e6" stroke-width="1.79"/>
<line x1="245.4" y1="268.9" x2="247.3" y2="270.0" stroke="#cdd3e6" stroke-width="1.79"/>
<line x1="245.4" y1="272.5" x2="247.3" y2="273.6" stroke="#cdd3e6" stroke-width="1.79"/>
<line x1="245.4" y1="276.1" x2="247.3" y2="277.2" stroke="#cdd3e6" stroke-width="1.79"/>
<line x1="245.4" y1="279.6" x2="247.3" y2="280.7" stroke="#cdd3e6" stroke-width="1.79"/>
<line x1="245.4" y1="283.2" x2="247.3" y2="284.3" stroke="#cdd3e6" stroke-width="1.79"/>
<line x1="245.4" y1="286.8" x2="247.3" y2="287.9" stroke="#cdd3e6" stroke-width="1.79"/>
<line x1="245.4" y1="290.4" x2="247.3" y2="291.5" stroke="#cdd3e6" stroke-width="1.79"/>
<line x1="245.4" y1="293.9" x2="247.3" y2="295.0" stroke="#cdd3e6" stroke-width="1.79"/>
<line x1="245.4" y1="297.5" x2="247.3" y2="298.6" stroke="#cdd3e6" stroke-width="1.79"/>
<line x1="245.4" y1="301.1" x2="247.3" y2="302.2" stroke="#cdd3e6" stroke-width="1.79"/>
<line x1="245.4" y1="304.7" x2="247.3" y2="305.8" stroke="#cdd3e6" stroke-width="1.79"/>
<line x1="245.4" y1="308.3" x2="247.3" y2="309.4" stroke="#cdd3e6" stroke-width="1.79"/>
<line x1="245.4" y1="311.8" x2="247.3" y2="312.9" stroke="#cdd3e6" stroke-width="1.79"/>
<line x1="245.4" y1="315.4" x2="247.3" y2="316.5" stroke="#cdd3e6" stroke-width="1.79"/>
</g>
<polygon points="247.0,202.5 257.5,207.5 257.5,326.5 246.3,318.0" fill="#96784f"/>
<clipPath id="c6"><polygon points="247.0,202.5 257.5,207.5 257.5,326.5 246.3,318.0"/></clipPath>
<g clip-path="url(#c6)"><g filter="url(#bl)">
<line x1="247.0" y1="204.4" x2="257.5" y2="209.5" stroke="#c2a271" stroke-width="1.95"/>
<line x1="247.0" y1="208.3" x2="257.5" y2="213.4" stroke="#c2a271" stroke-width="1.95"/>
<line x1="246.9" y1="212.1" x2="257.5" y2="217.4" stroke="#c2a271" stroke-width="1.95"/>
<line x1="246.9" y1="216.0" x2="257.5" y2="221.4" stroke="#c2a271" stroke-width="1.95"/>
<line x1="246.9" y1="219.8" x2="257.5" y2="225.3" stroke="#c2a271" stroke-width="1.95"/>
<line x1="246.9" y1="223.7" x2="257.5" y2="229.3" stroke="#c2a271" stroke-width="1.95"/>
<line x1="246.8" y1="227.5" x2="257.5" y2="233.3" stroke="#c2a271" stroke-width="1.95"/>
<line x1="246.8" y1="231.4" x2="257.5" y2="237.2" stroke="#c2a271" stroke-width="1.95"/>
<line x1="246.8" y1="235.2" x2="257.5" y2="241.2" stroke="#c2a271" stroke-width="1.95"/>
<line x1="246.8" y1="239.1" x2="257.5" y2="245.2" stroke="#c2a271" stroke-width="1.95"/>
<line x1="246.8" y1="242.9" x2="257.5" y2="249.2" stroke="#c2a271" stroke-width="1.95"/>
<line x1="246.7" y1="246.8" x2="257.5" y2="253.1" stroke="#c2a271" stroke-width="1.95"/>
<line x1="246.7" y1="250.6" x2="257.5" y2="257.1" stroke="#c2a271" stroke-width="1.95"/>
<line x1="246.7" y1="254.5" x2="257.5" y2="261.1" stroke="#c2a271" stroke-width="1.95"/>
<line x1="246.7" y1="258.3" x2="257.5" y2="265.0" stroke="#c2a271" stroke-width="1.95"/>
<line x1="246.6" y1="262.2" x2="257.5" y2="269.0" stroke="#c2a271" stroke-width="1.95"/>
<line x1="246.6" y1="266.0" x2="257.5" y2="272.9" stroke="#c2a271" stroke-width="1.95"/>
<line x1="246.6" y1="269.9" x2="257.5" y2="276.9" stroke="#c2a271" stroke-width="1.95"/>
<line x1="246.6" y1="273.7" x2="257.5" y2="280.9" stroke="#c2a271" stroke-width="1.95"/>
<line x1="246.5" y1="277.6" x2="257.5" y2="284.9" stroke="#c2a271" stroke-width="1.95"/>
<line x1="246.5" y1="281.4" x2="257.5" y2="288.8" stroke="#c2a271" stroke-width="1.95"/>
<line x1="246.5" y1="285.3" x2="257.5" y2="292.8" stroke="#c2a271" stroke-width="1.95"/>
<line x1="246.5" y1="289.1" x2="257.5" y2="296.8" stroke="#c2a271" stroke-width="1.95"/>
<line x1="246.5" y1="293.0" x2="257.5" y2="300.7" stroke="#c2a271" stroke-width="1.95"/>
<line x1="246.4" y1="296.8" x2="257.5" y2="304.7" stroke="#c2a271" stroke-width="1.95"/>
<line x1="246.4" y1="300.7" x2="257.5" y2="308.6" stroke="#c2a271" stroke-width="1.95"/>
<line x1="246.4" y1="304.5" x2="257.5" y2="312.6" stroke="#c2a271" stroke-width="1.95"/>
<line x1="246.4" y1="308.4" x2="257.5" y2="316.6" stroke="#c2a271" stroke-width="1.95"/>
<line x1="246.3" y1="312.2" x2="257.5" y2="320.6" stroke="#c2a271" stroke-width="1.95"/>
<line x1="246.3" y1="316.1" x2="257.5" y2="324.5" stroke="#c2a271" stroke-width="1.95"/>
</g></g>
<polygon points="247.0,202.5 257.5,207.8 345.8,163.3 336.0,157.0" fill="#a1b7c8"/>
<line x1="257.5" y1="208.0" x2="345.8" y2="163.5" stroke="#d39a4a" stroke-width="1.3"/>
<polygon points="253.8,192.0 263.1,188.8 267.5,191.9 259.0,194.6" fill="#a9bfd0"/>
<polygon points="253.8,192.0 259.0,194.6 259.0,199.1 253.8,196.5" fill="#b5ad86"/>
<polygon points="259.0,194.6 267.5,191.9 267.5,196.4 259.0,199.1" fill="#efe79a"/>
<polygon points="280.6,172.9 290.4,168.8 295.0,172.9 286.1,176.2" fill="#a9bfd0"/>
<polygon points="280.6,172.9 286.1,176.2 286.1,181.2 280.6,177.9" fill="#b5ad86"/>
<polygon points="286.1,176.2 295.0,172.9 295.0,177.9 286.1,181.2" fill="#efe79a"/>
<polygon points="316.9,159.2 325.9,155.0 330.1,159.1 321.9,162.5" fill="#a9bfd0"/>
<polygon points="316.9,159.2 321.9,162.5 321.9,167.5 316.9,164.2" fill="#b5ad86"/>
<polygon points="321.9,162.5 330.1,159.1 330.1,164.1 321.9,167.5" fill="#efe79a"/>
<polygon points="257.5,324.6 345.8,282.6 346.5,286.4 257.5,329.0" fill="#bfd0de"/>
<polygon points="257.5,328.4 346.5,285.8 346.9,300.2 264.8,339.0" fill="#dba96b"/>
<line x1="260.5" y1="332.9" x2="346.7" y2="291.8" stroke="#f3e6cf" stroke-width="0.6"/>
<line x1="262.9" y1="336.2" x2="346.8" y2="296.5" stroke="#f3e6cf" stroke-width="0.6"/>
<polygon points="256.0,327.0 257.5,328.4 264.8,339.0 256.0,337.6" fill="#b98d5a"/>
<line x1="256.0" y1="332.0" x2="264.8" y2="333.0" stroke="#e8d2b0" stroke-width="0.5"/>
<polygon points="459.4,208.8 552.0,164.0 551.8,261.0 458.8,308.8" fill="#ddb279"/>
<clipPath id="c7"><polygon points="459.4,208.8 552.0,164.0 551.8,261.0 458.8,308.8"/></clipPath>
<g clip-path="url(#c7)"><g filter="url(#bl)">
<line x1="459.4" y1="210.4" x2="552.0" y2="165.6" stroke="#f5eee2" stroke-width="1.71"/>
<line x1="459.4" y1="213.8" x2="552.0" y2="168.8" stroke="#f5eee2" stroke-width="1.71"/>
<line x1="459.3" y1="217.1" x2="552.0" y2="172.1" stroke="#f5eee2" stroke-width="1.71"/>
<line x1="459.3" y1="220.4" x2="552.0" y2="175.3" stroke="#f5eee2" stroke-width="1.71"/>
<line x1="459.3" y1="223.8" x2="552.0" y2="178.6" stroke="#f5eee2" stroke-width="1.71"/>
<line x1="459.3" y1="227.1" x2="552.0" y2="181.8" stroke="#f5eee2" stroke-width="1.71"/>
<line x1="459.3" y1="230.4" x2="551.9" y2="185.0" stroke="#f5eee2" stroke-width="1.71"/>
<line x1="459.2" y1="233.8" x2="551.9" y2="188.2" stroke="#f5eee2" stroke-width="1.71"/>
<line x1="459.2" y1="237.1" x2="551.9" y2="191.5" stroke="#f5eee2" stroke-width="1.71"/>
<line x1="459.2" y1="240.4" x2="551.9" y2="194.7" stroke="#f5eee2" stroke-width="1.71"/>
<line x1="459.2" y1="243.8" x2="551.9" y2="197.9" stroke="#f5eee2" stroke-width="1.71"/>
<line x1="459.2" y1="247.1" x2="551.9" y2="201.2" stroke="#f5eee2" stroke-width="1.71"/>
<line x1="459.1" y1="250.4" x2="551.9" y2="204.4" stroke="#f5eee2" stroke-width="1.71"/>
<line x1="459.1" y1="253.8" x2="551.9" y2="207.7" stroke="#f5eee2" stroke-width="1.71"/>
<line x1="459.1" y1="257.1" x2="551.9" y2="210.9" stroke="#f5eee2" stroke-width="1.71"/>
<line x1="459.1" y1="260.4" x2="551.9" y2="214.1" stroke="#f5eee2" stroke-width="1.71"/>
<line x1="459.0" y1="263.8" x2="551.9" y2="217.3" stroke="#f5eee2" stroke-width="1.71"/>
<line x1="459.0" y1="267.1" x2="551.9" y2="220.6" stroke="#f5eee2" stroke-width="1.71"/>
<line x1="459.0" y1="270.4" x2="551.8" y2="223.8" stroke="#f5eee2" stroke-width="1.71"/>
<line x1="459.0" y1="273.8" x2="551.8" y2="227.1" stroke="#f5eee2" stroke-width="1.71"/>
<line x1="459.0" y1="277.1" x2="551.8" y2="230.3" stroke="#f5eee2" stroke-width="1.71"/>
<line x1="458.9" y1="280.4" x2="551.8" y2="233.5" stroke="#f5eee2" stroke-width="1.71"/>
<line x1="458.9" y1="283.8" x2="551.8" y2="236.8" stroke="#f5eee2" stroke-width="1.71"/>
<line x1="458.9" y1="287.1" x2="551.8" y2="240.0" stroke="#f5eee2" stroke-width="1.71"/>
<line x1="458.9" y1="290.4" x2="551.8" y2="243.2" stroke="#f5eee2" stroke-width="1.71"/>
<line x1="458.8" y1="293.8" x2="551.8" y2="246.4" stroke="#f5eee2" stroke-width="1.71"/>
<line x1="458.8" y1="297.1" x2="551.8" y2="249.7" stroke="#f5eee2" stroke-width="1.71"/>
<line x1="458.8" y1="300.4" x2="551.8" y2="252.9" stroke="#f5eee2" stroke-width="1.71"/>
<line x1="458.8" y1="303.8" x2="551.8" y2="256.1" stroke="#f5eee2" stroke-width="1.71"/>
<line x1="458.8" y1="307.1" x2="551.8" y2="259.4" stroke="#f5eee2" stroke-width="1.71"/>
<line x1="463.6" y1="206.7" x2="462.9" y2="306.6" stroke="#ddb279" stroke-width="2.2"/>
<line x1="471.4" y1="202.9" x2="470.8" y2="302.5" stroke="#ddb279" stroke-width="2.2"/>
<line x1="479.3" y1="199.1" x2="478.7" y2="298.5" stroke="#ddb279" stroke-width="2.2"/>
<line x1="487.2" y1="195.3" x2="486.6" y2="294.4" stroke="#ddb279" stroke-width="2.2"/>
<line x1="495.1" y1="191.5" x2="494.6" y2="290.4" stroke="#ddb279" stroke-width="2.2"/>
<line x1="502.9" y1="187.7" x2="502.5" y2="286.3" stroke="#ddb279" stroke-width="2.2"/>
<line x1="510.8" y1="183.9" x2="510.4" y2="282.2" stroke="#ddb279" stroke-width="2.2"/>
<line x1="518.7" y1="180.1" x2="518.3" y2="278.2" stroke="#ddb279" stroke-width="2.2"/>
<line x1="526.5" y1="176.3" x2="526.2" y2="274.1" stroke="#ddb279" stroke-width="2.2"/>
<line x1="534.4" y1="172.5" x2="534.1" y2="270.1" stroke="#ddb279" stroke-width="2.2"/>
<line x1="542.3" y1="168.7" x2="542.0" y2="266.0" stroke="#ddb279" stroke-width="2.2"/>
<line x1="549.7" y1="165.1" x2="549.4" y2="262.2" stroke="#ddb279" stroke-width="2.2"/>
<line x1="479.3" y1="199.1" x2="478.7" y2="298.5" stroke="#866a48" stroke-width="1.5" stroke-dasharray="1.7 1.5"/>
<line x1="518.7" y1="180.1" x2="518.3" y2="278.2" stroke="#866a48" stroke-width="1.5" stroke-dasharray="1.7 1.5"/>
<line x1="467.7" y1="204.7" x2="467.1" y2="304.5" stroke="#6f5f55" stroke-width="0.7" stroke-dasharray="1.4 2.3"/>
<line x1="491.3" y1="193.3" x2="490.8" y2="292.3" stroke="#6f5f55" stroke-width="0.7" stroke-dasharray="1.4 2.3"/>
<line x1="499.2" y1="189.5" x2="498.7" y2="288.2" stroke="#6f5f55" stroke-width="0.7" stroke-dasharray="1.4 2.3"/>
<line x1="530.7" y1="174.3" x2="530.4" y2="272.0" stroke="#6f5f55" stroke-width="0.7" stroke-dasharray="1.4 2.3"/>
<line x1="538.6" y1="170.5" x2="538.3" y2="267.9" stroke="#6f5f55" stroke-width="0.7" stroke-dasharray="1.4 2.3"/>
<line x1="550.6" y1="164.7" x2="550.4" y2="261.7" stroke="#6f5f55" stroke-width="0.7" stroke-dasharray="1.4 2.3"/>
</g></g>
<g filter="url(#bl)">
<line x1="447.0" y1="205.2" x2="448.9" y2="206.3" stroke="#cdd3e6" stroke-width="1.49"/>
<line x1="447.0" y1="208.2" x2="448.9" y2="209.3" stroke="#cdd3e6" stroke-width="1.49"/>
<line x1="447.0" y1="211.2" x2="448.9" y2="212.3" stroke="#cdd3e6" stroke-width="1.49"/>
<line x1="447.0" y1="214.1" x2="448.9" y2="215.2" stroke="#cdd3e6" stroke-width="1.49"/>
<line x1="447.0" y1="217.1" x2="448.9" y2="218.2" stroke="#cdd3e6" stroke-width="1.49"/>
<line x1="447.0" y1="220.1" x2="448.9" y2="221.2" stroke="#cdd3e6" stroke-width="1.49"/>
<line x1="447.0" y1="223.1" x2="448.9" y2="224.2" stroke="#cdd3e6" stroke-width="1.49"/>
<line x1="447.0" y1="226.1" x2="448.9" y2="227.2" stroke="#cdd3e6" stroke-width="1.49"/>
<line x1="447.0" y1="229.1" x2="448.9" y2="230.2" stroke="#cdd3e6" stroke-width="1.49"/>
<line x1="447.0" y1="232.1" x2="448.9" y2="233.2" stroke="#cdd3e6" stroke-width="1.49"/>
<line x1="447.0" y1="235.0" x2="448.9" y2="236.1" stroke="#cdd3e6" stroke-width="1.49"/>
<line x1="447.0" y1="238.0" x2="448.9" y2="239.1" stroke="#cdd3e6" stroke-width="1.49"/>
<line x1="447.0" y1="241.0" x2="448.9" y2="242.1" stroke="#cdd3e6" stroke-width="1.49"/>
<line x1="447.0" y1="244.0" x2="448.9" y2="245.1" stroke="#cdd3e6" stroke-width="1.49"/>
<line x1="447.0" y1="247.0" x2="448.9" y2="248.1" stroke="#cdd3e6" stroke-width="1.49"/>
<line x1="447.0" y1="250.0" x2="448.9" y2="251.1" stroke="#cdd3e6" stroke-width="1.49"/>
<line x1="447.0" y1="252.9" x2="448.9" y2="254.0" stroke="#cdd3e6" stroke-width="1.49"/>
<line x1="447.0" y1="255.9" x2="448.9" y2="257.0" stroke="#cdd3e6" stroke-width="1.49"/>
<line x1="447.0" y1="258.9" x2="448.9" y2="260.0" stroke="#cdd3e6" stroke-width="1.49"/>
<line x1="447.0" y1="261.9" x2="448.9" y2="263.0" stroke="#cdd3e6" stroke-width="1.49"/>
<line x1="447.0" y1="264.9" x2="448.9" y2="266.0" stroke="#cdd3e6" stroke-width="1.49"/>
<line x1="447.0" y1="267.9" x2="448.9" y2="269.0" stroke="#cdd3e6" stroke-width="1.49"/>
<line x1="447.0" y1="270.8" x2="448.9" y2="271.9" stroke="#cdd3e6" stroke-width="1.49"/>
<line x1="447.0" y1="273.8" x2="448.9" y2="274.9" stroke="#cdd3e6" stroke-width="1.49"/>
<line x1="447.0" y1="276.8" x2="448.9" y2="277.9" stroke="#cdd3e6" stroke-width="1.49"/>
<line x1="447.0" y1="279.8" x2="448.9" y2="280.9" stroke="#cdd3e6" stroke-width="1.49"/>
<line x1="447.0" y1="282.8" x2="448.9" y2="283.9" stroke="#cdd3e6" stroke-width="1.49"/>
<line x1="447.0" y1="285.8" x2="448.9" y2="286.9" stroke="#cdd3e6" stroke-width="1.49"/>
<line x1="447.0" y1="288.8" x2="448.9" y2="289.9" stroke="#cdd3e6" stroke-width="1.49"/>
<line x1="447.0" y1="291.7" x2="448.9" y2="292.8" stroke="#cdd3e6" stroke-width="1.49"/>
<line x1="447.0" y1="294.7" x2="448.9" y2="295.8" stroke="#cdd3e6" stroke-width="1.49"/>
<line x1="447.0" y1="297.7" x2="448.9" y2="298.8" stroke="#cdd3e6" stroke-width="1.49"/>
</g>
<polygon points="448.8,203.8 459.4,208.8 458.8,309.0 447.5,300.5" fill="#96784f"/>
<clipPath id="c8"><polygon points="448.8,203.8 459.4,208.8 458.8,309.0 447.5,300.5"/></clipPath>
<g clip-path="url(#c8)"><g filter="url(#bl)">
<line x1="448.7" y1="205.4" x2="459.4" y2="210.4" stroke="#c2a271" stroke-width="1.64"/>
<line x1="448.7" y1="208.6" x2="459.4" y2="213.8" stroke="#c2a271" stroke-width="1.64"/>
<line x1="448.6" y1="211.8" x2="459.3" y2="217.1" stroke="#c2a271" stroke-width="1.64"/>
<line x1="448.6" y1="215.0" x2="459.3" y2="220.4" stroke="#c2a271" stroke-width="1.64"/>
<line x1="448.6" y1="218.3" x2="459.3" y2="223.8" stroke="#c2a271" stroke-width="1.64"/>
<line x1="448.5" y1="221.5" x2="459.3" y2="227.1" stroke="#c2a271" stroke-width="1.64"/>
<line x1="448.5" y1="224.7" x2="459.3" y2="230.5" stroke="#c2a271" stroke-width="1.64"/>
<line x1="448.4" y1="227.9" x2="459.2" y2="233.8" stroke="#c2a271" stroke-width="1.64"/>
<line x1="448.4" y1="231.2" x2="459.2" y2="237.2" stroke="#c2a271" stroke-width="1.64"/>
<line x1="448.4" y1="234.4" x2="459.2" y2="240.5" stroke="#c2a271" stroke-width="1.64"/>
<line x1="448.3" y1="237.6" x2="459.2" y2="243.8" stroke="#c2a271" stroke-width="1.64"/>
<line x1="448.3" y1="240.8" x2="459.2" y2="247.2" stroke="#c2a271" stroke-width="1.64"/>
<line x1="448.2" y1="244.1" x2="459.1" y2="250.5" stroke="#c2a271" stroke-width="1.64"/>
<line x1="448.2" y1="247.3" x2="459.1" y2="253.9" stroke="#c2a271" stroke-width="1.64"/>
<line x1="448.1" y1="250.5" x2="459.1" y2="257.2" stroke="#c2a271" stroke-width="1.64"/>
<line x1="448.1" y1="253.7" x2="459.1" y2="260.5" stroke="#c2a271" stroke-width="1.64"/>
<line x1="448.1" y1="257.0" x2="459.0" y2="263.9" stroke="#c2a271" stroke-width="1.64"/>
<line x1="448.0" y1="260.2" x2="459.0" y2="267.2" stroke="#c2a271" stroke-width="1.64"/>
<line x1="448.0" y1="263.4" x2="459.0" y2="270.6" stroke="#c2a271" stroke-width="1.64"/>
<line x1="447.9" y1="266.6" x2="459.0" y2="273.9" stroke="#c2a271" stroke-width="1.64"/>
<line x1="447.9" y1="269.9" x2="459.0" y2="277.3" stroke="#c2a271" stroke-width="1.64"/>
<line x1="447.9" y1="273.1" x2="458.9" y2="280.6" stroke="#c2a271" stroke-width="1.64"/>
<line x1="447.8" y1="276.3" x2="458.9" y2="283.9" stroke="#c2a271" stroke-width="1.64"/>
<line x1="447.8" y1="279.5" x2="458.9" y2="287.3" stroke="#c2a271" stroke-width="1.64"/>
<line x1="447.7" y1="282.8" x2="458.9" y2="290.6" stroke="#c2a271" stroke-width="1.64"/>
<line x1="447.7" y1="286.0" x2="458.8" y2="294.0" stroke="#c2a271" stroke-width="1.64"/>
<line x1="447.6" y1="289.2" x2="458.8" y2="297.3" stroke="#c2a271" stroke-width="1.64"/>
<line x1="447.6" y1="292.4" x2="458.8" y2="300.6" stroke="#c2a271" stroke-width="1.64"/>
<line x1="447.6" y1="295.7" x2="458.8" y2="304.0" stroke="#c2a271" stroke-width="1.64"/>
<line x1="447.5" y1="298.9" x2="458.8" y2="307.3" stroke="#c2a271" stroke-width="1.64"/>
</g></g>
<polygon points="448.8,203.8 459.4,209.0 552.0,164.3 537.5,155.6 530.0,160.0 512.5,169.0 505.0,174.0 497.5,180.0 482.5,186.0 464.5,194.0" fill="#a1b7c8"/>
<line x1="459.4" y1="209.2" x2="552.0" y2="164.5" stroke="#d39a4a" stroke-width="1.3"/>
<polygon points="464.4,189.8 473.7,186.9 478.1,189.8 469.6,192.1" fill="#a9bfd0"/>
<polygon points="464.4,189.8 469.6,192.1 469.6,196.3 464.4,194.0" fill="#b5ad86"/>
<polygon points="469.6,192.1 478.1,189.8 478.1,194.0 469.6,196.3" fill="#efe79a"/>
<polygon points="512.5,163.5 522.7,160.0 527.5,163.4 518.2,166.2" fill="#a9bfd0"/>
<polygon points="512.5,163.5 518.2,166.2 518.2,170.8 512.5,168.1" fill="#b5ad86"/>
<polygon points="518.2,166.2 527.5,163.4 527.5,168.0 518.2,170.8" fill="#efe79a"/>
<polygon points="458.8,308.8 551.8,261.0 557.0,262.0 452.5,313.9 447.5,300.5" fill="#c3d3e0"/>
<polygon points="452.5,313.8 557.0,262.0 557.0,283.8 452.5,337.0" fill="#dba96b"/>
<line x1="452.5" y1="322.6" x2="557.0" y2="270.3" stroke="#f3e6cf" stroke-width="0.6"/>
<line x1="452.5" y1="330.5" x2="557.0" y2="277.7" stroke="#f3e6cf" stroke-width="0.6"/>
<line x1="340.0" y1="219.2" x2="392.5" y2="219.2" stroke="#857a7a" stroke-width="0.8"/>
<line x1="366.4" y1="193.0" x2="366.4" y2="245.6" stroke="#857a7a" stroke-width="0.8"/>
<rect x="362.9" y="215.7" width="7" height="7" fill="none" stroke="#9a7fb0" stroke-width="0.9"/>
<line x1="26.3" y1="403.8" x2="26.3" y2="386.0" stroke="#2f6596" stroke-width="0.9"/>
<line x1="26.3" y1="403.8" x2="40.5" y2="396.0" stroke="#b4382c" stroke-width="0.9"/>
<line x1="26.3" y1="403.8" x2="14.5" y2="397.0" stroke="#2f7d3c" stroke-width="0.9"/>
<text x="27.4" y="390.2" font-size="5.4" fill="#2f6596" font-family="Liberation Sans, sans-serif">Z</text>
<text x="40.2" y="396.4" font-size="5.4" fill="#b4382c" font-family="Liberation Sans, sans-serif">X</text>
<text x="13.2" y="395.6" font-size="5.4" fill="#2f7d3c" font-family="Liberation Sans, sans-serif">Y</text>
</svg>

<!-- right panels -->
<div class="abs" style="left:795px;top:70px;width:3px;height:409px;background:#c8cede"></div>
<div class="abs white" style="left:797.8px;top:70px;width:98px;height:409px"></div>
<div class="phead" style="top:69.2px"><span>属性</span></div>
<div class="abs" style="left:880.6px;top:71.2px;font-size:5.4px;color:#26325e">✱</div>
<svg class="abs" style="left:888.4px;top:71.2px" width="5" height="5" viewBox="0 0 5 5"><path d="M0.5,0.5 L4.5,4.5 M4.5,0.5 L0.5,4.5" stroke="#222a50" stroke-width="1"/></svg>
<div class="vline" style="left:846px;top:78px;height:197px"></div>
<div class="phead" style="top:275.4px;height:9.7px;line-height:9.9px"><span>指标: 计算完成</span></div>
<div class="abs" style="left:880.6px;top:278.2px;font-size:5.4px;color:#26325e">✱</div>
<svg class="abs" style="left:888.4px;top:278px" width="5" height="5" viewBox="0 0 5 5"><path d="M0.5,0.5 L4.5,4.5 M4.5,0.5 L0.5,4.5" stroke="#222a50" stroke-width="1"/></svg>
<div class="vline" style="left:847.4px;top:285px;height:185.6px"></div>
<div class="vline" style="left:880.6px;top:285px;height:185.6px"></div>
<div class="cell" style="left:801px;top:289.6px">类别</div>
<div class="val" style="top:289.6px;font-size:5.5px">总平值</div>
<div class="cell" style="left:888.6px;top:289.6px">单</div>
<div class="hline" style="top:298.3px"></div>
<div class="cell" style="left:809px;top:300.1px;color:#2a3ea0">建设用地</div>
<div class="val" style="top:299.9px">47874.38</div>
<div class="cell c3" style="left:884.0px;top:299.9px">478</div>
<div class="hline" style="top:308.1px"></div>
<div class="cell" style="left:809px;top:309.9px;color:#222">地块道路用地</div>
<div class="hline" style="top:317.9px"></div>
<div class="cell" style="left:809px;top:319.6px;color:#222">集中绿地</div>
<div class="hline" style="top:327.6px"></div>
<div class="cell" style="left:809px;top:329.4px;color:#222">道路用地</div>
<div class="hline" style="top:337.4px"></div>
<div class="cell" style="left:809px;top:339.2px;color:#222">总绿地面积</div>
<div class="val" style="top:339.0px">570.29</div>
<div class="cell c3" style="left:887.6px;top:339.0px">57</div>
<div class="hline" style="top:347.2px"></div>
<div class="cell" style="left:809px;top:349.0px;color:#222">总建筑面积</div>
<div class="val" style="top:348.8px">215250...</div>
<div class="cell c3" style="left:884.0px;top:348.8px">215.</div>
<div class="hline" style="top:356.9px"></div>
<div class="cell" style="left:809px;top:358.7px;color:#222">基底面积</div>
<div class="val" style="top:358.5px">41130.05</div>
<div class="cell c3" style="left:884.0px;top:358.5px">411</div>
<div class="hline" style="top:366.7px"></div>
<div class="cell" style="left:809px;top:368.5px;color:#222">容积率</div>
<div class="val" style="top:368.3px">4.61</div>
<div class="cell c3" style="left:892.5px;top:368.3px">4</div>
<div class="hline" style="top:376.5px"></div>
<div class="cell" style="left:809px;top:378.3px;color:#222">绿地率</div>
<div class="val" style="top:378.1px">1.19</div>
<div class="cell c3" style="left:892.5px;top:378.1px">1</div>
<div class="hline" style="top:386.2px"></div>
<div class="cell" style="left:809px;top:388.0px;color:#222">人均绿地面积</div>
<div class="hline" style="top:396.0px"></div>
<div class="cell" style="left:809px;top:397.8px;color:#222">建筑密度</div>
<div class="val" style="top:397.6px">85.91</div>
<div class="cell c3" style="left:887.6px;top:397.6px">85</div>
<div class="hline" style="top:405.8px"></div>
<div class="cell" style="left:809px;top:407.6px;color:#222">机动车泊位</div>
<div class="val" style="top:407.4px">1474</div>
<div class="cell c3" style="left:887.6px;top:407.4px">14</div>
<div class="hline" style="top:415.6px"></div>
<div class="cell" style="left:809px;top:417.3px;color:#222">停车率</div>
<div class="hline" style="top:425.3px"></div>
<div class="cell" style="left:809px;top:427.1px;color:#222">地上停车率</div>
<div class="hline" style="top:435.1px"></div>
<div class="cell" style="left:809px;top:436.9px;color:#222">屋顶绿地</div>
<div class="hline" style="top:444.9px"></div>
<div class="cell" style="left:809px;top:446.6px;color:#222">最大层数</div>
<div class="val" style="top:446.4px">32</div>
<div class="cell c3" style="left:892.5px;top:446.4px">3</div>
<div class="hline" style="top:454.6px"></div>
<div class="cell" style="left:809px;top:456.4px;color:#222">最大高度</div>
<div class="val" style="top:456.2px">106.81</div>
<div class="cell c3" style="left:887.6px;top:456.2px">10</div>
<div class="hline" style="top:464.4px"></div>
<div class="abs white" style="left:895.8px;top:60px;width:2.2px;height:436px"></div>
<div class="abs" style="left:797.8px;top:470.6px;width:98px;height:7.2px;background:#f0f0f0"></div>
<div class="abs" style="left:806.8px;top:470.6px;width:55.5px;height:7.2px;background:#cdcdcd"></div>
<svg class="abs" style="left:800.5px;top:471.6px" width="5" height="6" viewBox="0 0 5 6"><path d="M3.4,0.8 L1.4,2.8 L3.4,4.8" fill="none" stroke="#555" stroke-width="1"/></svg>
<svg class="abs" style="left:888px;top:471.6px" width="5" height="6" viewBox="0 0 5 6"><path d="M1.6,0.8 L3.6,2.8 L1.6,4.8" fill="none" stroke="#555" stroke-width="1"/></svg>
<div class="abs" style="left:797.8px;top:477.8px;width:98px;height:1.2px;background:#cfd6e8"></div>

<!-- bottom -->
<div class="abs" style="left:1px;top:438px;width:795px;height:5px;background:#d9ddec"></div>
<div class="abs" id="tabstrip"></div>
<div class="abs" style="left:3.6px;top:431.4px;font-size:4.2px;color:#8a94b4">◀</div>
<svg class="abs" style="left:0;top:428px" width="120" height="11" viewBox="0 0 120 11">
<polygon points="8.5,0.8 19,9.6 50,9.6 43.5,0.8" fill="#bcc2da" stroke="#8e98b8" stroke-width="0.5"/>
<polygon points="43.5,0.8 50,9.6 109,9.6 109,0.8" fill="#ffffff" stroke="#b4bbd2" stroke-width="0.4"/>
</svg>
<div class="abs" style="left:25.4px;top:430.2px;font-size:5.6px;color:#1a2440">无标题1</div>
<div class="abs" style="left:57.6px;top:430px;font-size:6px;color:#111;font-weight:bold">实测总平图已定义</div>
<div class="abs" style="left:779px;top:431px;font-size:4.6px;color:#7a88b8">▷</div>
<svg class="abs" style="left:787px;top:430.8px" width="5" height="5" viewBox="0 0 5 5"><path d="M0.6,0.6 L4.2,4.2 M4.2,0.6 L0.6,4.2" stroke="#7a88b8" stroke-width="0.8"/></svg>
<div class="abs" id="cmdout"></div>
<div class="abs" style="left:783.5px;top:443.8px;width:0.6px;height:23.6px;background:#dcdcdc"></div>
<svg class="abs" style="left:786px;top:445.6px" width="6" height="20" viewBox="0 0 6 20"><path d="M0.8,3.6 L2.8,1.4 L4.8,3.6 M0.8,16 L2.8,18.2 L4.8,16" fill="none" stroke="#a8a8a8" stroke-width="0.7"/></svg>
<div class="abs" id="cmdline"></div>
<div class="abs" style="left:3.2px;top:469px;font-size:5.6px;color:#111;font-weight:bold">命令:</div>
<svg class="abs" style="left:786.5px;top:469.8px" width="5" height="7" viewBox="0 0 5 7"><path d="M1,2.4 L2.5,1 L4,2.4 M1,4.6 L2.5,6 L4,4.6" fill="none" stroke="#c0c0c0" stroke-width="0.6"/></svg>
<div class="abs" id="status"></div>
<div class="st" style="left:1.6px;color:#4760ae;font-family:'Liberation Mono','Noto Sans CJK SC',monospace;font-size:4.68px;top:484.9px">409717.114, 3819237.901, 0.000</div>
<div class="abs" style="left:155.2px;top:481px;width:15.4px;height:7.8px;background:#e9edf7;border:0.5px solid #f4f6fb;box-sizing:border-box"></div>
<div class="abs" style="left:171.2px;top:481px;width:48.6px;height:7.8px;background:linear-gradient(#b4cff2,#8fb4e6);border:0.5px solid #c8daf4;box-sizing:border-box"></div><div class="abs" style="left:187.4px;top:481px;width:0.7px;height:7.8px;background:#c8daf4"></div><div class="abs" style="left:204.2px;top:481px;width:0.7px;height:7.8px;background:#c8daf4"></div>
<div class="st" style="left:157.4px">正交</div>
<div class="st" style="left:173.7px">极轴</div>
<div class="st" style="left:190.6px">捕捉</div>
<div class="st" style="left:206.9px">跟随</div>
<div class="st" style="left:756.8px;letter-spacing:0.57px">当前城市：河南乡镇一_商住</div>
<div class="abs" style="left:842.2px;top:480.2px;width:0.8px;height:10px;background:#e8ecf6"></div>
<div class="st" style="left:847.6px">加粗</div>
<div class="st" style="left:863.3px">修正</div>
<div class="abs" style="left:878.8px;top:480.2px;width:0.8px;height:10px;background:#e8ecf6"></div>
<div class="st" style="left:881px">二维</div>
<div class="abs" id="taskbar"></div>

</body>
</html>
